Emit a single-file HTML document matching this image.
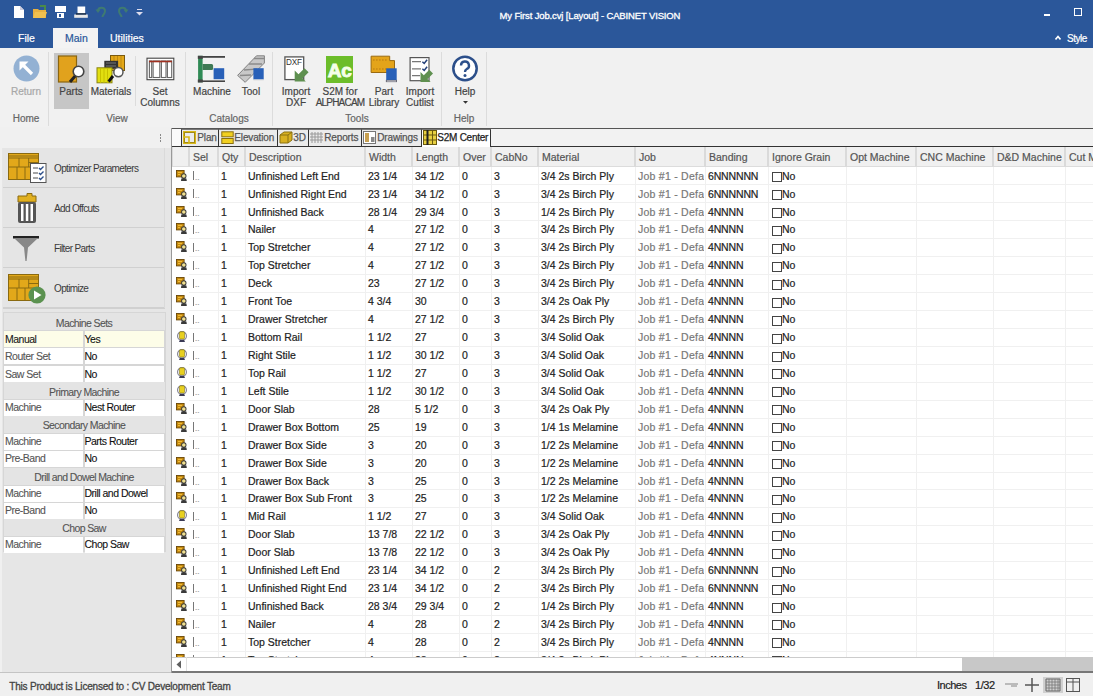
<!DOCTYPE html>
<html><head><meta charset="utf-8"><style>
html,body{margin:0;padding:0;}
body{width:1093px;height:696px;overflow:hidden;position:relative;background:#f0f0f0;font-family:"Liberation Sans", sans-serif;}
.t{position:absolute;white-space:nowrap;line-height:1;-webkit-text-stroke-width:0.2px;}
.r{position:absolute;}
</style></head><body>
<div class="r" style="left:0px;top:0px;width:1093px;height:48px;background:#2b579a;"></div><svg class="r" style="left:13px;top:5px" width="12" height="14" viewBox="0 0 12 14"><path d="M1 1h6l4 4v8H1z" fill="#fff"/><path d="M7 1v4h4" fill="#ccd" /></svg><svg class="r" style="left:32px;top:5px" width="16" height="14" viewBox="0 0 16 14"><path d="M1 4h5l1 1h7v8H1z" fill="#e8b040"/><path d="M3 7h12l-2 6H1z" fill="#f0c050"/><path d="M8 1h5v4" fill="none" stroke="#4a8a4a" stroke-width="2"/></svg><svg class="r" style="left:55px;top:6px" width="11" height="12" viewBox="0 0 11 12"><rect x="0" y="0" width="11" height="6" fill="#fff"/><rect x="2" y="7" width="7" height="5" fill="#fff"/><rect x="4" y="8" width="2" height="3" fill="#2b579a"/></svg><svg class="r" style="left:74px;top:6px" width="14" height="12" viewBox="0 0 14 12"><rect x="3.5" y="0.5" width="7.7" height="7" fill="#fff"/><rect x="0.2" y="8.5" width="13.6" height="3.3" fill="#e8e8e8"/><rect x="2" y="7.2" width="10" height="1.4" fill="#1a2a40"/></svg><svg class="r" style="left:95px;top:5px" width="12" height="13" viewBox="0 0 12 13"><path d="M3 6 C3 1.5 10 1.5 10 6 C10 9 7.5 10 7.5 12" fill="none" stroke="#3f7a72" stroke-width="2"/><path d="M0.5 4.5 L5.5 4.5 L3 8z" fill="#3f7a72"/></svg><svg class="r" style="left:117px;top:5px" width="12" height="13" viewBox="0 0 12 13"><path d="M9 6 C9 1.5 2 1.5 2 6 C2 9 4.5 10 4.5 12" fill="none" stroke="#3f7a72" stroke-width="2"/><path d="M6.5 4.5 L11.5 4.5 L9 8z" fill="#3f7a72"/></svg><svg class="r" style="left:136px;top:9px" width="7" height="7" viewBox="0 0 7 7"><rect x="1" y="0" width="5" height="1" fill="#dde"/><path d="M0 3h7l-3.5 3.5z" fill="#dde"/></svg><div class="t" style="left:499.5px;top:11px;font-size:9.5px;color:#fff;letter-spacing:-0.14px;font-weight:normal;-webkit-text-stroke-width:0.3px">My First Job.cvj [Layout] - CABINET VISION</div><div class="r" style="left:1044px;top:14px;width:6px;height:2px;background:#fff;"></div><div class="r" style="left:1074px;top:8px;width:6px;height:6px;background:transparent;border:1.5px solid #fff"></div><div class="t" style="left:18px;top:33px;font-size:10.5px;color:#fff;letter-spacing:0px;font-weight:normal;">File</div><div class="r" style="left:53px;top:28px;width:45px;height:20px;background:#f3f3f3;"></div><div class="t" style="left:65px;top:33px;font-size:10.5px;color:#2b579a;letter-spacing:0px;font-weight:normal;">Main</div><div class="t" style="left:110px;top:33px;font-size:10.5px;color:#fff;letter-spacing:0px;font-weight:normal;">Utilities</div><svg class="r" style="left:1055px;top:35px" width="6" height="5" viewBox="0 0 6 5"><path d="M0.5 4.5L3 1.5L5.5 4.5" fill="none" stroke="#fff" stroke-width="1.6"/></svg><div class="t" style="left:1067px;top:33.5px;font-size:10px;color:#fff;letter-spacing:-0.5px;font-weight:normal;">Style</div><div class="r" style="left:0px;top:48px;width:1093px;height:79px;background:#f1f1f1;"></div><div class="r" style="left:48px;top:52px;width:1px;height:74px;background:#dcdcdc;"></div><div class="r" style="left:185px;top:52px;width:1px;height:74px;background:#dcdcdc;"></div><div class="r" style="left:272px;top:52px;width:1px;height:74px;background:#dcdcdc;"></div><div class="r" style="left:441px;top:52px;width:1px;height:74px;background:#dcdcdc;"></div><div class="r" style="left:486px;top:52px;width:1px;height:74px;background:#dcdcdc;"></div><div class="r" style="left:135px;top:56px;width:1px;height:50px;background:#dcdcdc;"></div><div class="r" style="left:54px;top:53px;width:35px;height:56px;background:#c6c6c6;"></div><div class="t" style="left:-34.0px;width:120px;text-align:center;top:113.5px;font-size:10px;color:#666;letter-spacing:0px;">Home</div><div class="t" style="left:57.0px;width:120px;text-align:center;top:113.5px;font-size:10px;color:#666;letter-spacing:0px;">View</div><div class="t" style="left:169.0px;width:120px;text-align:center;top:113.5px;font-size:10px;color:#666;letter-spacing:0px;">Catalogs</div><div class="t" style="left:297.0px;width:120px;text-align:center;top:113.5px;font-size:10px;color:#666;letter-spacing:0px;">Tools</div><div class="t" style="left:404.0px;width:120px;text-align:center;top:113.5px;font-size:10px;color:#666;letter-spacing:0px;">Help</div><svg class="r" style="left:13px;top:55px" width="27" height="27" viewBox="0 0 27 27"><circle cx="13.5" cy="13.5" r="13" fill="#93b1d3"/><path d="M8 8 L19 19" stroke="#fff" stroke-width="3.2"/><path d="M6.5 6.5 h9 l-9 9z" fill="#fff"/></svg><div class="t" style="left:-34.0px;width:120px;text-align:center;top:86.8px;font-size:10px;color:#a8a8a8;letter-spacing:0px;">Return</div><svg class="r" style="left:57px;top:55px" width="28" height="29" viewBox="0 0 28 29"><rect x="1.5" y="1" width="18" height="26" fill="#e1a21d" stroke="#8a6510" stroke-width="1.2"/><path d="M13 27 L19 20" stroke="#222" stroke-width="3"/><circle cx="21.5" cy="16.5" r="5.3" fill="#fff" stroke="#444" stroke-width="1.6"/></svg><div class="t" style="left:11.0px;width:120px;text-align:center;top:86.8px;font-size:10px;color:#444;letter-spacing:0px;">Parts</div><svg class="r" style="left:96px;top:55px" width="30" height="29" viewBox="0 0 30 29"><rect x="14.5" y="0.5" width="14" height="15" fill="#e4a818" stroke="#7a5a10"/><path d="M18 1v14M21.5 1v14M25 1v14" stroke="#c08a10" stroke-width="1"/><rect x="8.3" y="5.8" width="13.8" height="8" fill="#333"/><path d="M10 8h10M10 11h10" stroke="#777" stroke-width="1"/><rect x="1" y="12.8" width="15" height="15" fill="#e2df10" stroke="#8a8410"/><path d="M4.5 13v15M8 13v15M11.5 13v15" stroke="#c8c000" stroke-width="1"/><path d="M12.6 26.7 L17 21" stroke="#111" stroke-width="3"/><circle cx="22.4" cy="17.1" r="4.6" fill="#fff" stroke="#555" stroke-width="1.5"/></svg><div class="t" style="left:51.0px;width:120px;text-align:center;top:86.8px;font-size:10px;color:#444;letter-spacing:0px;">Materials</div><svg class="r" style="left:146px;top:57px" width="29" height="24" viewBox="0 0 29 24"><rect x="1" y="1.2" width="26.8" height="21.5" fill="#fff" stroke="#444" stroke-width="1.1"/><rect x="3.4" y="4" width="2.3" height="16.5" fill="#fff" stroke="#666" stroke-width="1.1"/><rect x="7.1" y="4" width="6.7" height="16.5" fill="#fff" stroke="#666" stroke-width="1.1"/><rect x="15.4" y="4" width="4.6" height="16.5" fill="#fff" stroke="#666" stroke-width="1.1"/><rect x="21.4" y="4" width="4.3" height="16.5" fill="#fff" stroke="#666" stroke-width="1.1"/><path d="M3 4.5h23" stroke="#a03020" stroke-width="1.6"/></svg><div class="t" style="left:100.0px;width:120px;text-align:center;top:86.8px;font-size:10px;color:#444;letter-spacing:0px;">Set</div><div class="t" style="left:100.0px;width:120px;text-align:center;top:97.8px;font-size:10px;color:#444;letter-spacing:0px;">Columns</div><svg class="r" style="left:197px;top:55px" width="29" height="29" viewBox="0 0 29 29"><rect x="1.1" y="0.8" width="4.5" height="26.5" fill="#2f8a55"/><rect x="0.8" y="0.8" width="5" height="3" fill="#444"/><rect x="0.8" y="24.5" width="5" height="3" fill="#444"/><path d="M5 1.9h23" stroke="#444" stroke-width="1.8"/><path d="M5.6 9.1h9a1.5 1.5 0 0 1 1.5 1.5v2.8a1.5 1.5 0 0 1 -1.5 1.5h-9z" fill="#3f7a55"/><rect x="16.6" y="13.2" width="10.6" height="11" fill="#2860b8"/><path d="M5 26.2h23" stroke="#444" stroke-width="1.6"/></svg><div class="t" style="left:152.0px;width:120px;text-align:center;top:86.8px;font-size:10px;color:#444;letter-spacing:0px;">Machine</div><svg class="r" style="left:237px;top:55px" width="29" height="29" viewBox="0 0 29 29"><path d="M19.5 0.8 L27.4 0.8 L27.4 8 L8.2 27.3 L0.6 20.4z" fill="#c8c8c8" stroke="#777" stroke-width="0.9"/><path d="M17 3.5 L27 3.5 M12 9 L25 9 M7 15 L20 14 M3 20.5 L14 20" stroke="#8a8a8a" stroke-width="1.3"/><rect x="16.4" y="13.2" width="10.3" height="11.3" fill="#2860b8"/><path d="M16.4 25h10.3" stroke="#ddd"/></svg><div class="t" style="left:191.0px;width:120px;text-align:center;top:86.8px;font-size:10px;color:#444;letter-spacing:0px;">Tool</div><svg class="r" style="left:283px;top:56px" width="28" height="28" viewBox="0 0 28 28"><rect x="1.9" y="0.9" width="18.8" height="22.7" fill="#fff" stroke="#555" stroke-width="1.3"/><text x="3" y="8.7" font-size="8.2" font-family="Liberation Sans" fill="#333" letter-spacing="-0.2">DXF</text><path d="M11.7 25.5 L11.7 14.4 L15.5 18.2 L21.5 12.2 L25.6 16.3 L19.6 22.3 L22.8 25.5 Z" fill="#5f9050"/></svg><div class="t" style="left:236.0px;width:120px;text-align:center;top:86.8px;font-size:10px;color:#444;letter-spacing:0px;">Import</div><div class="t" style="left:236.0px;width:120px;text-align:center;top:97.8px;font-size:10px;color:#444;letter-spacing:0px;">DXF</div><svg class="r" style="left:326px;top:56px" width="27" height="27" viewBox="0 0 27 27"><rect x="0" y="0" width="27" height="27" fill="#6cbd2a"/><text x="1.8" y="20.5" style="font-weight:bold;font-size:19px;font-family:Liberation Sans" fill="#f4ffe8" stroke="#f4ffe8" stroke-width="0.9" letter-spacing="-0.2">Ac</text></svg><div class="t" style="left:280.0px;width:120px;text-align:center;top:86.8px;font-size:10px;color:#444;letter-spacing:0px;">S2M for</div><div class="t" style="left:280.0px;width:120px;text-align:center;top:97.8px;font-size:10px;color:#444;letter-spacing:-0.8px;">ALPHACAM</div><svg class="r" style="left:370px;top:55px" width="28" height="28" viewBox="0 0 28 28"><path d="M1.1 1.2 H19.7 V5.6 H24.5 V17.5 H1.1 Z" fill="#e4a41a" stroke="#9a6a10" stroke-width="1"/><path d="M3 5h15M3 14h15" stroke="#b87a10" stroke-width="1.2" stroke-dasharray="1.6 1.4"/><rect x="16.2" y="13.3" width="10.5" height="11.9" fill="#2860b8"/><rect x="16.2" y="25.2" width="10.5" height="1.6" fill="#fff" stroke="#445" stroke-width="0.6"/></svg><div class="t" style="left:324.0px;width:120px;text-align:center;top:86.8px;font-size:10px;color:#444;letter-spacing:0px;">Part</div><div class="t" style="left:324.0px;width:120px;text-align:center;top:97.8px;font-size:10px;color:#444;letter-spacing:0px;">Library</div><svg class="r" style="left:409px;top:57px" width="28" height="28" viewBox="0 0 28 28"><rect x="1.1" y="0.6" width="18.9" height="23.1" fill="#fff" stroke="#555" stroke-width="1.2"/><path d="M3 4.6h9M3 11.8h9M3 18.7h8" stroke="#777" stroke-width="1.3"/><path d="M13.4 4.8l1.8 1.7 2.9-3.8M13.4 11.8l1.8 1.7 2.9-3.8" fill="none" stroke="#223f78" stroke-width="1.5"/><path d="M11.5 25.1 L11.5 14.9 L14.8 18.2 L20.3 12.7 L24 16.4 L18.5 21.9 L21.7 25.1 Z" fill="#5f9050"/></svg><div class="t" style="left:360.0px;width:120px;text-align:center;top:86.8px;font-size:10px;color:#444;letter-spacing:0px;">Import</div><div class="t" style="left:360.0px;width:120px;text-align:center;top:97.8px;font-size:10px;color:#444;letter-spacing:0px;">Cutlist</div><svg class="r" style="left:451px;top:55px" width="28" height="28" viewBox="0 0 28 28"><circle cx="14" cy="13.5" r="11.7" fill="#fff" stroke="#2c4f8a" stroke-width="2.5"/><path d="M10 10.5 a4 4 0 1 1 5.5 3.7 c-1.2 0.6 -1.5 1.2 -1.5 2.8" fill="none" stroke="#2c4f8a" stroke-width="2.4"/><circle cx="14" cy="20.5" r="1.5" fill="#2c4f8a"/></svg><div class="t" style="left:405.0px;width:120px;text-align:center;top:86.8px;font-size:10px;color:#444;letter-spacing:0px;">Help</div><svg class="r" style="left:462.5px;top:100.5px" width="5" height="3" viewBox="0 0 5 3"><path d="M0 0h5l-2.5 2.8z" fill="#333"/></svg><div class="r" style="left:0px;top:127px;width:171px;height:545px;background:#e6e6e6;"></div><div class="r" style="left:0px;top:127px;width:171px;height:21px;background:#f0f0f0;"></div><div class="r" style="left:0px;top:127px;width:1.5px;height:545px;background:#f0f0f0;"></div><div class="r" style="left:0px;top:672px;width:171px;height:1px;background:#c8c8c8;"></div><div class="r" style="left:159.5px;top:134px;width:1.5px;height:1.5px;background:#8a8a8a;"></div><div class="r" style="left:159.5px;top:137px;width:1.5px;height:1.5px;background:#8a8a8a;"></div><div class="r" style="left:159.5px;top:140px;width:1.5px;height:1.5px;background:#8a8a8a;"></div><div class="r" style="left:3px;top:148px;width:162px;height:40px;background:#e5e5e5;"></div><div class="r" style="left:3px;top:186.5px;width:162px;height:2px;background:#d0d0d0;"></div><div class="r" style="left:164px;top:148px;width:1px;height:40px;background:#dadada;"></div><div class="t" style="left:54px;top:163.5px;font-size:10px;color:#3a3a3a;letter-spacing:-0.65px;font-weight:normal;-webkit-text-stroke-width:0">Optimizer Parameters</div><div class="r" style="left:3px;top:188px;width:162px;height:40px;background:#e5e5e5;"></div><div class="r" style="left:3px;top:226.5px;width:162px;height:2px;background:#d0d0d0;"></div><div class="r" style="left:164px;top:188px;width:1px;height:40px;background:#dadada;"></div><div class="t" style="left:54px;top:203.5px;font-size:10px;color:#3a3a3a;letter-spacing:-0.65px;font-weight:normal;-webkit-text-stroke-width:0">Add Offcuts</div><div class="r" style="left:3px;top:228px;width:162px;height:40px;background:#e5e5e5;"></div><div class="r" style="left:3px;top:266.5px;width:162px;height:2px;background:#d0d0d0;"></div><div class="r" style="left:164px;top:228px;width:1px;height:40px;background:#dadada;"></div><div class="t" style="left:54px;top:243.5px;font-size:10px;color:#3a3a3a;letter-spacing:-0.65px;font-weight:normal;-webkit-text-stroke-width:0">Filter Parts</div><div class="r" style="left:3px;top:268px;width:162px;height:40px;background:#e5e5e5;"></div><div class="r" style="left:3px;top:306.5px;width:162px;height:2px;background:#d0d0d0;"></div><div class="r" style="left:164px;top:268px;width:1px;height:40px;background:#dadada;"></div><div class="t" style="left:54px;top:283.5px;font-size:10px;color:#3a3a3a;letter-spacing:-0.65px;font-weight:normal;-webkit-text-stroke-width:0">Optimize</div><svg class="r" style="left:8px;top:153px" width="39" height="31" viewBox="0 0 39 31"><rect x="0.5" y="0.5" width="30" height="26" fill="#e2a81a" stroke="#8a6a10"/><path d="M0.5 3h30M0.5 5h30M0.5 14h30M11 5v9M20.7 5v9M20.7 9.5h10M9 14v12.5M17 14v12.5" stroke="#8a6a10" stroke-width="1"/><rect x="22.5" y="10.5" width="15.5" height="19" fill="#fff" stroke="#555"/><path d="M25 15h5M25 20h5M25 25h5" stroke="#888" stroke-width="1.3"/><path d="M31 15l1.5 1.5 3-3M31 20l1.5 1.5 3-3M31 25l1.5 1.5 3-3" fill="none" stroke="#2c4f8a" stroke-width="1.4"/></svg><svg class="r" style="left:17px;top:193px" width="20" height="31" viewBox="0 0 20 31"><path d="M1 3h9v-2.5h5v2.5h4v6H1z" fill="#e1b020" stroke="#8a6a10"/><rect x="1" y="9" width="18" height="21" rx="2" fill="#555"/><rect x="4" y="11" width="2.5" height="17" fill="#fff"/><rect x="8.8" y="11" width="2.5" height="17" fill="#fff"/><rect x="13.5" y="11" width="2.5" height="17" fill="#fff"/></svg><svg class="r" style="left:13px;top:235px" width="27" height="27" viewBox="0 0 27 27"><rect x="0" y="1" width="26" height="2.5" fill="#222"/><path d="M1.5 3.5H24.5L15 12.5L13.6 26L12.4 26L11 12.5Z" fill="#888"/></svg><svg class="r" style="left:8px;top:274px" width="40" height="30" viewBox="0 0 40 30"><rect x="0.5" y="0.5" width="30" height="26" fill="#e2a81a" stroke="#8a6a10"/><path d="M0.5 3h30M0.5 5h30M0.5 14h30M11 5v9M20.7 5v9M20.7 9.5h10M9 14v12.5M17 14v12.5" stroke="#8a6a10" stroke-width="1"/><circle cx="29" cy="21" r="8.6" fill="#5b9250"/><path d="M26 16.5 L33.5 21 L26 25.5z" fill="#fff"/></svg><div class="r" style="left:3px;top:312px;width:163px;height:240px;background:#d6d6d6;"></div><div class="r" style="left:4px;top:313px;width:161px;height:17px;background:#e4e4e4;"></div><div class="t" style="left:4.0px;width:160px;text-align:center;top:317.8px;font-size:10.5px;color:#555;letter-spacing:-0.6px;-webkit-text-stroke-width:0.1px">Machine Sets</div><div class="r" style="left:4px;top:331px;width:79px;height:16px;background:#fdfde8;"></div><div class="r" style="left:85px;top:331px;width:79px;height:16px;background:#fdfde8;"></div><div class="t" style="left:5px;top:333.73846153846154px;font-size:10.5px;color:#1a1a1a;letter-spacing:-0.5px;font-weight:normal;-webkit-text-stroke-width:0.1px">Manual</div><div class="t" style="left:84.5px;top:333.73846153846154px;font-size:10.5px;color:#111;letter-spacing:-0.5px;font-weight:normal;-webkit-text-stroke-width:0.1px">Yes</div><div class="r" style="left:4px;top:348px;width:79px;height:16px;background:#fff;"></div><div class="r" style="left:85px;top:348px;width:79px;height:16px;background:#fff;"></div><div class="t" style="left:5px;top:350.67692307692306px;font-size:10.5px;color:#555;letter-spacing:-0.5px;font-weight:normal;-webkit-text-stroke-width:0.1px">Router Set</div><div class="t" style="left:84.5px;top:350.67692307692306px;font-size:10.5px;color:#111;letter-spacing:-0.5px;font-weight:normal;-webkit-text-stroke-width:0.1px">No</div><div class="r" style="left:4px;top:366px;width:79px;height:16px;background:#fff;"></div><div class="r" style="left:85px;top:366px;width:79px;height:16px;background:#fff;"></div><div class="t" style="left:5px;top:368.61538461538464px;font-size:10.5px;color:#555;letter-spacing:-0.5px;font-weight:normal;-webkit-text-stroke-width:0.1px">Saw Set</div><div class="t" style="left:84.5px;top:368.61538461538464px;font-size:10.5px;color:#111;letter-spacing:-0.5px;font-weight:normal;-webkit-text-stroke-width:0.1px">No</div><div class="r" style="left:4px;top:382px;width:161px;height:17px;background:#e4e4e4;"></div><div class="t" style="left:4.0px;width:160px;text-align:center;top:386.55384615384617px;font-size:10.5px;color:#555;letter-spacing:-0.6px;-webkit-text-stroke-width:0.1px">Primary Machine</div><div class="r" style="left:4px;top:400px;width:79px;height:16px;background:#fff;"></div><div class="r" style="left:85px;top:400px;width:79px;height:16px;background:#fff;"></div><div class="t" style="left:5px;top:402.4923076923077px;font-size:10.5px;color:#555;letter-spacing:-0.5px;font-weight:normal;-webkit-text-stroke-width:0.1px">Machine</div><div class="t" style="left:84.5px;top:402.4923076923077px;font-size:10.5px;color:#111;letter-spacing:-0.5px;font-weight:normal;-webkit-text-stroke-width:0.1px">Nest Router</div><div class="r" style="left:4px;top:416px;width:161px;height:17px;background:#e4e4e4;"></div><div class="t" style="left:4.0px;width:160px;text-align:center;top:420.4307692307692px;font-size:10.5px;color:#555;letter-spacing:-0.6px;-webkit-text-stroke-width:0.1px">Secondary Machine</div><div class="r" style="left:4px;top:434px;width:79px;height:16px;background:#fff;"></div><div class="r" style="left:85px;top:434px;width:79px;height:16px;background:#fff;"></div><div class="t" style="left:5px;top:436.3692307692308px;font-size:10.5px;color:#555;letter-spacing:-0.5px;font-weight:normal;-webkit-text-stroke-width:0.1px">Machine</div><div class="t" style="left:84.5px;top:436.3692307692308px;font-size:10.5px;color:#111;letter-spacing:-0.5px;font-weight:normal;-webkit-text-stroke-width:0.1px">Parts Router</div><div class="r" style="left:4px;top:451px;width:79px;height:16px;background:#fff;"></div><div class="r" style="left:85px;top:451px;width:79px;height:16px;background:#fff;"></div><div class="t" style="left:5px;top:453.3076923076923px;font-size:10.5px;color:#555;letter-spacing:-0.5px;font-weight:normal;-webkit-text-stroke-width:0.1px">Pre-Band</div><div class="t" style="left:84.5px;top:453.3076923076923px;font-size:10.5px;color:#111;letter-spacing:-0.5px;font-weight:normal;-webkit-text-stroke-width:0.1px">No</div><div class="r" style="left:4px;top:468px;width:161px;height:17px;background:#e4e4e4;"></div><div class="t" style="left:4.0px;width:160px;text-align:center;top:472.24615384615385px;font-size:10.5px;color:#555;letter-spacing:-0.6px;-webkit-text-stroke-width:0.1px">Drill and Dowel Machine</div><div class="r" style="left:4px;top:486px;width:79px;height:16px;background:#fff;"></div><div class="r" style="left:85px;top:486px;width:79px;height:16px;background:#fff;"></div><div class="t" style="left:5px;top:488.18461538461537px;font-size:10.5px;color:#555;letter-spacing:-0.5px;font-weight:normal;-webkit-text-stroke-width:0.1px">Machine</div><div class="t" style="left:84.5px;top:488.18461538461537px;font-size:10.5px;color:#111;letter-spacing:-0.5px;font-weight:normal;-webkit-text-stroke-width:0.1px">Drill and Dowel</div><div class="r" style="left:4px;top:503px;width:79px;height:16px;background:#fff;"></div><div class="r" style="left:85px;top:503px;width:79px;height:16px;background:#fff;"></div><div class="t" style="left:5px;top:505.12307692307695px;font-size:10.5px;color:#555;letter-spacing:-0.5px;font-weight:normal;-webkit-text-stroke-width:0.1px">Pre-Band</div><div class="t" style="left:84.5px;top:505.12307692307695px;font-size:10.5px;color:#111;letter-spacing:-0.5px;font-weight:normal;-webkit-text-stroke-width:0.1px">No</div><div class="r" style="left:4px;top:519px;width:161px;height:17px;background:#e4e4e4;"></div><div class="t" style="left:4.0px;width:160px;text-align:center;top:523.0615384615385px;font-size:10.5px;color:#555;letter-spacing:-0.6px;-webkit-text-stroke-width:0.1px">Chop Saw</div><div class="r" style="left:4px;top:537px;width:79px;height:16px;background:#fff;"></div><div class="r" style="left:85px;top:537px;width:79px;height:16px;background:#fff;"></div><div class="t" style="left:5px;top:539.0px;font-size:10.5px;color:#555;letter-spacing:-0.5px;font-weight:normal;-webkit-text-stroke-width:0.1px">Machine</div><div class="t" style="left:84.5px;top:539.0px;font-size:10.5px;color:#111;letter-spacing:-0.5px;font-weight:normal;-webkit-text-stroke-width:0.1px">Chop Saw</div><div class="r" style="left:171px;top:128px;width:922px;height:544px;background:#fff;"></div><div class="r" style="left:171px;top:128px;width:922px;height:18px;background:#f2f2f2;"></div><div class="r" style="left:171px;top:128px;width:922px;height:1.2px;background:#555;"></div><div class="r" style="left:171px;top:145.8px;width:922px;height:1.2px;background:#333;"></div><div class="r" style="left:172px;top:129px;width:9px;height:17px;background:#fafafa;"></div><div class="r" style="left:181px;top:129px;width:37px;height:17px;background:#ebebeb;box-sizing:border-box;border-left:1.5px solid #333;border-top:1px solid #777;"></div><div class="t" style="left:197.3px;top:133.2px;font-size:10px;color:#555;letter-spacing:-0.15px;font-weight:normal;-webkit-text-stroke-width:0.25px">Plan</div><div class="r" style="left:218px;top:129px;width:59px;height:17px;background:#ebebeb;box-sizing:border-box;border-left:1.5px solid #333;border-top:1px solid #777;"></div><div class="t" style="left:234.3px;top:133.2px;font-size:10px;color:#555;letter-spacing:-0.15px;font-weight:normal;-webkit-text-stroke-width:0.25px">Elevation</div><div class="r" style="left:277px;top:129px;width:31px;height:17px;background:#ebebeb;box-sizing:border-box;border-left:1.5px solid #333;border-top:1px solid #777;"></div><div class="t" style="left:293.3px;top:133.2px;font-size:10px;color:#555;letter-spacing:-0.15px;font-weight:normal;-webkit-text-stroke-width:0.25px">3D</div><div class="r" style="left:308px;top:129px;width:53px;height:17px;background:#ebebeb;box-sizing:border-box;border-left:1.5px solid #333;border-top:1px solid #777;"></div><div class="t" style="left:324.3px;top:133.2px;font-size:10px;color:#555;letter-spacing:-0.15px;font-weight:normal;-webkit-text-stroke-width:0.25px">Reports</div><div class="r" style="left:361px;top:129px;width:60px;height:17px;background:#ebebeb;box-sizing:border-box;border-left:1.5px solid #333;border-top:1px solid #777;"></div><div class="t" style="left:377.3px;top:133.2px;font-size:10px;color:#555;letter-spacing:-0.15px;font-weight:normal;-webkit-text-stroke-width:0.25px">Drawings</div><div class="r" style="left:421px;top:129px;width:70px;height:18px;background:#fff;box-sizing:border-box;border-left:1.5px solid #333;border-top:1px solid #777;border-right:1.5px solid #333;"></div><div class="t" style="left:437.3px;top:133.2px;font-size:10px;color:#222;letter-spacing:-0.25px;font-weight:normal;-webkit-text-stroke-width:0.25px">S2M Center</div><svg class="r" style="left:183px;top:131px" width="13" height="13" viewBox="0 0 13 13"><path d="M1 1h11v11H1z" fill="none" stroke="#d8b818" stroke-width="2"/><path d="M1.5 1.5h10v10h-10z" fill="none" stroke="#6a5a10" stroke-width="0.5"/><path d="M1 6h5v6" fill="none" stroke="#d8b818" stroke-width="1.6"/></svg><svg class="r" style="left:221px;top:131px" width="13" height="13" viewBox="0 0 13 13"><rect x="0.8" y="0.8" width="11.4" height="5" fill="#f2d020" stroke="#8a7010"/><rect x="0.8" y="7.5" width="11.4" height="5" fill="#f2d020" stroke="#8a7010"/></svg><svg class="r" style="left:279px;top:131px" width="14" height="13" viewBox="0 0 14 13"><path d="M1 4 L5 1 H13 V9 L9 12 H1z" fill="#d8b020" stroke="#8a7010"/><path d="M1 4h8v8M9 4l4-3" fill="none" stroke="#8a7010"/></svg><svg class="r" style="left:310px;top:130px" width="13" height="14" viewBox="0 0 13 14"><path d="M2 2v11M5 2v11M8 2v11M11 2v11M0 4h13M0 7h13M0 10h13" stroke="#999" stroke-width="1"/></svg><svg class="r" style="left:363px;top:131px" width="13" height="13" viewBox="0 0 13 13"><rect x="0.5" y="0.5" width="12" height="12" fill="#fff" stroke="#777"/><rect x="2" y="2" width="4" height="9" fill="#c8a050"/><rect x="8" y="6" width="3.5" height="5" fill="#888"/></svg><svg class="r" style="left:423px;top:130px" width="14" height="15" viewBox="0 0 14 15"><rect x="0.5" y="0.5" width="13" height="14" fill="#e8d040" stroke="#6a5a10"/><path d="M4.5 0v15M9.5 0v15M0 5h14M0 10h14" stroke="#6a5a10"/><path d="M4.5 0v15" stroke="#222" stroke-width="2"/></svg><div class="r" style="left:172px;top:147px;width:921px;height:20px;background:#f0f0f0;"></div><div class="r" style="left:172px;top:166px;width:921px;height:1px;background:#dcdcdc;"></div><div class="r" style="left:171px;top:147px;width:2px;height:20px;background:#dadada;"></div><div class="r" style="left:188px;top:147px;width:2px;height:20px;background:#dadada;"></div><div class="t" style="left:193px;top:151.5px;font-size:10.5px;color:#555;letter-spacing:0px;font-weight:normal;">Sel</div><div class="r" style="left:217px;top:147px;width:2px;height:20px;background:#dadada;"></div><div class="t" style="left:222px;top:151.5px;font-size:10.5px;color:#555;letter-spacing:0px;font-weight:normal;">Qty</div><div class="r" style="left:244px;top:147px;width:2px;height:20px;background:#dadada;"></div><div class="t" style="left:249px;top:151.5px;font-size:10.5px;color:#555;letter-spacing:0px;font-weight:normal;">Description</div><div class="r" style="left:364px;top:147px;width:2px;height:20px;background:#dadada;"></div><div class="t" style="left:369px;top:151.5px;font-size:10.5px;color:#555;letter-spacing:0px;font-weight:normal;">Width</div><div class="r" style="left:411px;top:147px;width:2px;height:20px;background:#dadada;"></div><div class="t" style="left:416px;top:151.5px;font-size:10.5px;color:#555;letter-spacing:0px;font-weight:normal;">Length</div><div class="r" style="left:458px;top:147px;width:2px;height:20px;background:#dadada;"></div><div class="t" style="left:463px;top:151.5px;font-size:10.5px;color:#555;letter-spacing:0px;font-weight:normal;">Over</div><div class="r" style="left:490px;top:147px;width:2px;height:20px;background:#dadada;"></div><div class="t" style="left:495px;top:151.5px;font-size:10.5px;color:#555;letter-spacing:0px;font-weight:normal;">CabNo</div><div class="r" style="left:537px;top:147px;width:2px;height:20px;background:#dadada;"></div><div class="t" style="left:542px;top:151.5px;font-size:10.5px;color:#555;letter-spacing:0px;font-weight:normal;">Material</div><div class="r" style="left:634px;top:147px;width:2px;height:20px;background:#dadada;"></div><div class="t" style="left:639px;top:151.5px;font-size:10.5px;color:#555;letter-spacing:0px;font-weight:normal;">Job</div><div class="r" style="left:704px;top:147px;width:2px;height:20px;background:#dadada;"></div><div class="t" style="left:709px;top:151.5px;font-size:10.5px;color:#555;letter-spacing:0px;font-weight:normal;">Banding</div><div class="r" style="left:767px;top:147px;width:2px;height:20px;background:#dadada;"></div><div class="t" style="left:772px;top:151.5px;font-size:10.5px;color:#555;letter-spacing:0px;font-weight:normal;">Ignore Grain</div><div class="r" style="left:845px;top:147px;width:2px;height:20px;background:#dadada;"></div><div class="t" style="left:850px;top:151.5px;font-size:10.5px;color:#555;letter-spacing:0px;font-weight:normal;">Opt Machine</div><div class="r" style="left:915px;top:147px;width:2px;height:20px;background:#dadada;"></div><div class="t" style="left:920px;top:151.5px;font-size:10.5px;color:#555;letter-spacing:0px;font-weight:normal;">CNC Machine</div><div class="r" style="left:992px;top:147px;width:2px;height:20px;background:#dadada;"></div><div class="t" style="left:997px;top:151.5px;font-size:10.5px;color:#555;letter-spacing:0px;font-weight:normal;">D&amp;D Machine</div><div class="r" style="left:1064px;top:147px;width:2px;height:20px;background:#dadada;"></div><div class="t" style="left:1069px;top:151.5px;font-size:10.5px;color:#555;letter-spacing:0px;font-weight:normal;">Cut Machine</div><div class="r b" style="left:172px;top:167px;width:921px;height:490px;overflow:hidden"><div class="r" style="left:17px;top:17px;width:904px;height:1px;background:#f0f0f0;"></div><svg class="r" style="left:4px;top:2.7px" width="12" height="12" viewBox="0 0 12 12"><rect x="0.5" y="0.5" width="7.6" height="6.4" fill="#c48a0e" stroke="#6a4606" stroke-width="0.9"/><path d="M2 2.5h4M2 4.5h2" stroke="#f5c040" stroke-width="0.9"/><path d="M5 11 L5.3 8.6 Q7.8 7.2 10.4 8.6 L10.8 11z" fill="#3a3a3a"/><circle cx="7.8" cy="6" r="2.7" fill="#3a3a3a"/><circle cx="7.8" cy="6" r="1.8" fill="#f0e090"/></svg><div class="r" style="left:20.5px;top:4.3px;width:1.3px;height:9.2px;background:#777;"></div><div class="t" style="left:23px;top:6.7px;font-size:8px;color:#999;letter-spacing:0px;font-weight:normal;">..</div><div class="t" style="left:49px;top:3.7px;font-size:10.5px;color:#222;letter-spacing:0px;font-weight:normal;">1</div><div class="t" style="left:76px;top:3.7px;font-size:10.5px;color:#222;letter-spacing:0px;font-weight:normal;">Unfinished Left End</div><div class="t" style="left:196px;top:3.7px;font-size:10.5px;color:#222;letter-spacing:0px;font-weight:normal;">23 1/4</div><div class="t" style="left:243px;top:3.7px;font-size:10.5px;color:#222;letter-spacing:0px;font-weight:normal;">34 1/2</div><div class="t" style="left:290px;top:3.7px;font-size:10.5px;color:#222;letter-spacing:0px;font-weight:normal;">0</div><div class="t" style="left:322px;top:3.7px;font-size:10.5px;color:#222;letter-spacing:0px;font-weight:normal;">3</div><div class="t" style="left:369px;top:3.7px;font-size:10.5px;color:#222;letter-spacing:0px;font-weight:normal;">3/4 2s Birch Ply</div><div class="t" style="left:466px;top:3.7px;font-size:10.5px;color:#777;letter-spacing:0.25px;font-weight:normal;width:65.5px;overflow:hidden">Job #1 - Default</div><div class="t" style="left:536px;top:3.7px;font-size:10.5px;color:#222;letter-spacing:-0.15px;font-weight:normal;">6NNNNNN</div><div class="r" style="left:600px;top:5.2px;width:10px;height:10px;background:transparent;box-sizing:border-box;border:1.2px solid #444"></div><div class="t" style="left:610px;top:3.7px;font-size:10.5px;color:#222;letter-spacing:-0.15px;font-weight:normal;">No</div><div class="r" style="left:17px;top:35px;width:904px;height:1px;background:#f0f0f0;"></div><svg class="r" style="left:4px;top:20.63px" width="12" height="12" viewBox="0 0 12 12"><rect x="0.5" y="0.5" width="7.6" height="6.4" fill="#c48a0e" stroke="#6a4606" stroke-width="0.9"/><path d="M2 2.5h4M2 4.5h2" stroke="#f5c040" stroke-width="0.9"/><path d="M5 11 L5.3 8.6 Q7.8 7.2 10.4 8.6 L10.8 11z" fill="#3a3a3a"/><circle cx="7.8" cy="6" r="2.7" fill="#3a3a3a"/><circle cx="7.8" cy="6" r="1.8" fill="#f0e090"/></svg><div class="r" style="left:20.5px;top:22.23px;width:1.3px;height:9.2px;background:#777;"></div><div class="t" style="left:23px;top:24.63px;font-size:8px;color:#999;letter-spacing:0px;font-weight:normal;">..</div><div class="t" style="left:49px;top:21.63px;font-size:10.5px;color:#222;letter-spacing:0px;font-weight:normal;">1</div><div class="t" style="left:76px;top:21.63px;font-size:10.5px;color:#222;letter-spacing:0px;font-weight:normal;">Unfinished Right End</div><div class="t" style="left:196px;top:21.63px;font-size:10.5px;color:#222;letter-spacing:0px;font-weight:normal;">23 1/4</div><div class="t" style="left:243px;top:21.63px;font-size:10.5px;color:#222;letter-spacing:0px;font-weight:normal;">34 1/2</div><div class="t" style="left:290px;top:21.63px;font-size:10.5px;color:#222;letter-spacing:0px;font-weight:normal;">0</div><div class="t" style="left:322px;top:21.63px;font-size:10.5px;color:#222;letter-spacing:0px;font-weight:normal;">3</div><div class="t" style="left:369px;top:21.63px;font-size:10.5px;color:#222;letter-spacing:0px;font-weight:normal;">3/4 2s Birch Ply</div><div class="t" style="left:466px;top:21.63px;font-size:10.5px;color:#777;letter-spacing:0.25px;font-weight:normal;width:65.5px;overflow:hidden">Job #1 - Default</div><div class="t" style="left:536px;top:21.63px;font-size:10.5px;color:#222;letter-spacing:-0.15px;font-weight:normal;">6NNNNNN</div><div class="r" style="left:600px;top:23.13px;width:10px;height:10px;background:transparent;box-sizing:border-box;border:1.2px solid #444"></div><div class="t" style="left:610px;top:21.63px;font-size:10.5px;color:#222;letter-spacing:-0.15px;font-weight:normal;">No</div><div class="r" style="left:17px;top:53px;width:904px;height:1px;background:#f0f0f0;"></div><svg class="r" style="left:4px;top:38.56px" width="12" height="12" viewBox="0 0 12 12"><rect x="0.5" y="0.5" width="7.6" height="6.4" fill="#c48a0e" stroke="#6a4606" stroke-width="0.9"/><path d="M2 2.5h4M2 4.5h2" stroke="#f5c040" stroke-width="0.9"/><path d="M5 11 L5.3 8.6 Q7.8 7.2 10.4 8.6 L10.8 11z" fill="#3a3a3a"/><circle cx="7.8" cy="6" r="2.7" fill="#3a3a3a"/><circle cx="7.8" cy="6" r="1.8" fill="#f0e090"/></svg><div class="r" style="left:20.5px;top:40.160000000000004px;width:1.3px;height:9.2px;background:#777;"></div><div class="t" style="left:23px;top:42.56px;font-size:8px;color:#999;letter-spacing:0px;font-weight:normal;">..</div><div class="t" style="left:49px;top:39.56px;font-size:10.5px;color:#222;letter-spacing:0px;font-weight:normal;">1</div><div class="t" style="left:76px;top:39.56px;font-size:10.5px;color:#222;letter-spacing:0px;font-weight:normal;">Unfinished Back</div><div class="t" style="left:196px;top:39.56px;font-size:10.5px;color:#222;letter-spacing:0px;font-weight:normal;">28 1/4</div><div class="t" style="left:243px;top:39.56px;font-size:10.5px;color:#222;letter-spacing:0px;font-weight:normal;">29 3/4</div><div class="t" style="left:290px;top:39.56px;font-size:10.5px;color:#222;letter-spacing:0px;font-weight:normal;">0</div><div class="t" style="left:322px;top:39.56px;font-size:10.5px;color:#222;letter-spacing:0px;font-weight:normal;">3</div><div class="t" style="left:369px;top:39.56px;font-size:10.5px;color:#222;letter-spacing:0px;font-weight:normal;">1/4 2s Birch Ply</div><div class="t" style="left:466px;top:39.56px;font-size:10.5px;color:#777;letter-spacing:0.25px;font-weight:normal;width:65.5px;overflow:hidden">Job #1 - Default</div><div class="t" style="left:536px;top:39.56px;font-size:10.5px;color:#222;letter-spacing:-0.15px;font-weight:normal;">4NNNN</div><div class="r" style="left:600px;top:41.06px;width:10px;height:10px;background:transparent;box-sizing:border-box;border:1.2px solid #444"></div><div class="t" style="left:610px;top:39.56px;font-size:10.5px;color:#222;letter-spacing:-0.15px;font-weight:normal;">No</div><div class="r" style="left:17px;top:71px;width:904px;height:1px;background:#f0f0f0;"></div><svg class="r" style="left:4px;top:56.49px" width="12" height="12" viewBox="0 0 12 12"><rect x="0.5" y="0.5" width="7.6" height="6.4" fill="#c48a0e" stroke="#6a4606" stroke-width="0.9"/><path d="M2 2.5h4M2 4.5h2" stroke="#f5c040" stroke-width="0.9"/><path d="M5 11 L5.3 8.6 Q7.8 7.2 10.4 8.6 L10.8 11z" fill="#3a3a3a"/><circle cx="7.8" cy="6" r="2.7" fill="#3a3a3a"/><circle cx="7.8" cy="6" r="1.8" fill="#f0e090"/></svg><div class="r" style="left:20.5px;top:58.09px;width:1.3px;height:9.2px;background:#777;"></div><div class="t" style="left:23px;top:60.49px;font-size:8px;color:#999;letter-spacing:0px;font-weight:normal;">..</div><div class="t" style="left:49px;top:57.49px;font-size:10.5px;color:#222;letter-spacing:0px;font-weight:normal;">1</div><div class="t" style="left:76px;top:57.49px;font-size:10.5px;color:#222;letter-spacing:0px;font-weight:normal;">Nailer</div><div class="t" style="left:196px;top:57.49px;font-size:10.5px;color:#222;letter-spacing:0px;font-weight:normal;">4</div><div class="t" style="left:243px;top:57.49px;font-size:10.5px;color:#222;letter-spacing:0px;font-weight:normal;">27 1/2</div><div class="t" style="left:290px;top:57.49px;font-size:10.5px;color:#222;letter-spacing:0px;font-weight:normal;">0</div><div class="t" style="left:322px;top:57.49px;font-size:10.5px;color:#222;letter-spacing:0px;font-weight:normal;">3</div><div class="t" style="left:369px;top:57.49px;font-size:10.5px;color:#222;letter-spacing:0px;font-weight:normal;">3/4 2s Birch Ply</div><div class="t" style="left:466px;top:57.49px;font-size:10.5px;color:#777;letter-spacing:0.25px;font-weight:normal;width:65.5px;overflow:hidden">Job #1 - Default</div><div class="t" style="left:536px;top:57.49px;font-size:10.5px;color:#222;letter-spacing:-0.15px;font-weight:normal;">4NNNN</div><div class="r" style="left:600px;top:58.99px;width:10px;height:10px;background:transparent;box-sizing:border-box;border:1.2px solid #444"></div><div class="t" style="left:610px;top:57.49px;font-size:10.5px;color:#222;letter-spacing:-0.15px;font-weight:normal;">No</div><div class="r" style="left:17px;top:89px;width:904px;height:1px;background:#f0f0f0;"></div><svg class="r" style="left:4px;top:74.42px" width="12" height="12" viewBox="0 0 12 12"><rect x="0.5" y="0.5" width="7.6" height="6.4" fill="#c48a0e" stroke="#6a4606" stroke-width="0.9"/><path d="M2 2.5h4M2 4.5h2" stroke="#f5c040" stroke-width="0.9"/><path d="M5 11 L5.3 8.6 Q7.8 7.2 10.4 8.6 L10.8 11z" fill="#3a3a3a"/><circle cx="7.8" cy="6" r="2.7" fill="#3a3a3a"/><circle cx="7.8" cy="6" r="1.8" fill="#f0e090"/></svg><div class="r" style="left:20.5px;top:76.02px;width:1.3px;height:9.2px;background:#777;"></div><div class="t" style="left:23px;top:78.42px;font-size:8px;color:#999;letter-spacing:0px;font-weight:normal;">..</div><div class="t" style="left:49px;top:75.42px;font-size:10.5px;color:#222;letter-spacing:0px;font-weight:normal;">1</div><div class="t" style="left:76px;top:75.42px;font-size:10.5px;color:#222;letter-spacing:0px;font-weight:normal;">Top Stretcher</div><div class="t" style="left:196px;top:75.42px;font-size:10.5px;color:#222;letter-spacing:0px;font-weight:normal;">4</div><div class="t" style="left:243px;top:75.42px;font-size:10.5px;color:#222;letter-spacing:0px;font-weight:normal;">27 1/2</div><div class="t" style="left:290px;top:75.42px;font-size:10.5px;color:#222;letter-spacing:0px;font-weight:normal;">0</div><div class="t" style="left:322px;top:75.42px;font-size:10.5px;color:#222;letter-spacing:0px;font-weight:normal;">3</div><div class="t" style="left:369px;top:75.42px;font-size:10.5px;color:#222;letter-spacing:0px;font-weight:normal;">3/4 2s Birch Ply</div><div class="t" style="left:466px;top:75.42px;font-size:10.5px;color:#777;letter-spacing:0.25px;font-weight:normal;width:65.5px;overflow:hidden">Job #1 - Default</div><div class="t" style="left:536px;top:75.42px;font-size:10.5px;color:#222;letter-spacing:-0.15px;font-weight:normal;">4NNNN</div><div class="r" style="left:600px;top:76.92px;width:10px;height:10px;background:transparent;box-sizing:border-box;border:1.2px solid #444"></div><div class="t" style="left:610px;top:75.42px;font-size:10.5px;color:#222;letter-spacing:-0.15px;font-weight:normal;">No</div><div class="r" style="left:17px;top:107px;width:904px;height:1px;background:#f0f0f0;"></div><svg class="r" style="left:4px;top:92.35000000000001px" width="12" height="12" viewBox="0 0 12 12"><rect x="0.5" y="0.5" width="7.6" height="6.4" fill="#c48a0e" stroke="#6a4606" stroke-width="0.9"/><path d="M2 2.5h4M2 4.5h2" stroke="#f5c040" stroke-width="0.9"/><path d="M5 11 L5.3 8.6 Q7.8 7.2 10.4 8.6 L10.8 11z" fill="#3a3a3a"/><circle cx="7.8" cy="6" r="2.7" fill="#3a3a3a"/><circle cx="7.8" cy="6" r="1.8" fill="#f0e090"/></svg><div class="r" style="left:20.5px;top:93.95px;width:1.3px;height:9.2px;background:#777;"></div><div class="t" style="left:23px;top:96.35000000000001px;font-size:8px;color:#999;letter-spacing:0px;font-weight:normal;">..</div><div class="t" style="left:49px;top:93.35000000000001px;font-size:10.5px;color:#222;letter-spacing:0px;font-weight:normal;">1</div><div class="t" style="left:76px;top:93.35000000000001px;font-size:10.5px;color:#222;letter-spacing:0px;font-weight:normal;">Top Stretcher</div><div class="t" style="left:196px;top:93.35000000000001px;font-size:10.5px;color:#222;letter-spacing:0px;font-weight:normal;">4</div><div class="t" style="left:243px;top:93.35000000000001px;font-size:10.5px;color:#222;letter-spacing:0px;font-weight:normal;">27 1/2</div><div class="t" style="left:290px;top:93.35000000000001px;font-size:10.5px;color:#222;letter-spacing:0px;font-weight:normal;">0</div><div class="t" style="left:322px;top:93.35000000000001px;font-size:10.5px;color:#222;letter-spacing:0px;font-weight:normal;">3</div><div class="t" style="left:369px;top:93.35000000000001px;font-size:10.5px;color:#222;letter-spacing:0px;font-weight:normal;">3/4 2s Birch Ply</div><div class="t" style="left:466px;top:93.35000000000001px;font-size:10.5px;color:#777;letter-spacing:0.25px;font-weight:normal;width:65.5px;overflow:hidden">Job #1 - Default</div><div class="t" style="left:536px;top:93.35000000000001px;font-size:10.5px;color:#222;letter-spacing:-0.15px;font-weight:normal;">4NNNN</div><div class="r" style="left:600px;top:94.85000000000001px;width:10px;height:10px;background:transparent;box-sizing:border-box;border:1.2px solid #444"></div><div class="t" style="left:610px;top:93.35000000000001px;font-size:10.5px;color:#222;letter-spacing:-0.15px;font-weight:normal;">No</div><div class="r" style="left:17px;top:125px;width:904px;height:1px;background:#f0f0f0;"></div><svg class="r" style="left:4px;top:110.28px" width="12" height="12" viewBox="0 0 12 12"><rect x="0.5" y="0.5" width="7.6" height="6.4" fill="#c48a0e" stroke="#6a4606" stroke-width="0.9"/><path d="M2 2.5h4M2 4.5h2" stroke="#f5c040" stroke-width="0.9"/><path d="M5 11 L5.3 8.6 Q7.8 7.2 10.4 8.6 L10.8 11z" fill="#3a3a3a"/><circle cx="7.8" cy="6" r="2.7" fill="#3a3a3a"/><circle cx="7.8" cy="6" r="1.8" fill="#f0e090"/></svg><div class="r" style="left:20.5px;top:111.88px;width:1.3px;height:9.2px;background:#777;"></div><div class="t" style="left:23px;top:114.28px;font-size:8px;color:#999;letter-spacing:0px;font-weight:normal;">..</div><div class="t" style="left:49px;top:111.28px;font-size:10.5px;color:#222;letter-spacing:0px;font-weight:normal;">1</div><div class="t" style="left:76px;top:111.28px;font-size:10.5px;color:#222;letter-spacing:0px;font-weight:normal;">Deck</div><div class="t" style="left:196px;top:111.28px;font-size:10.5px;color:#222;letter-spacing:0px;font-weight:normal;">23</div><div class="t" style="left:243px;top:111.28px;font-size:10.5px;color:#222;letter-spacing:0px;font-weight:normal;">27 1/2</div><div class="t" style="left:290px;top:111.28px;font-size:10.5px;color:#222;letter-spacing:0px;font-weight:normal;">0</div><div class="t" style="left:322px;top:111.28px;font-size:10.5px;color:#222;letter-spacing:0px;font-weight:normal;">3</div><div class="t" style="left:369px;top:111.28px;font-size:10.5px;color:#222;letter-spacing:0px;font-weight:normal;">3/4 2s Birch Ply</div><div class="t" style="left:466px;top:111.28px;font-size:10.5px;color:#777;letter-spacing:0.25px;font-weight:normal;width:65.5px;overflow:hidden">Job #1 - Default</div><div class="t" style="left:536px;top:111.28px;font-size:10.5px;color:#222;letter-spacing:-0.15px;font-weight:normal;">4NNNN</div><div class="r" style="left:600px;top:112.78px;width:10px;height:10px;background:transparent;box-sizing:border-box;border:1.2px solid #444"></div><div class="t" style="left:610px;top:111.28px;font-size:10.5px;color:#222;letter-spacing:-0.15px;font-weight:normal;">No</div><div class="r" style="left:17px;top:143px;width:904px;height:1px;background:#f0f0f0;"></div><svg class="r" style="left:4px;top:128.21px" width="12" height="12" viewBox="0 0 12 12"><rect x="0.5" y="0.5" width="7.6" height="6.4" fill="#c48a0e" stroke="#6a4606" stroke-width="0.9"/><path d="M2 2.5h4M2 4.5h2" stroke="#f5c040" stroke-width="0.9"/><path d="M5 11 L5.3 8.6 Q7.8 7.2 10.4 8.6 L10.8 11z" fill="#3a3a3a"/><circle cx="7.8" cy="6" r="2.7" fill="#3a3a3a"/><circle cx="7.8" cy="6" r="1.8" fill="#f0e090"/></svg><div class="r" style="left:20.5px;top:129.81px;width:1.3px;height:9.2px;background:#777;"></div><div class="t" style="left:23px;top:132.21px;font-size:8px;color:#999;letter-spacing:0px;font-weight:normal;">..</div><div class="t" style="left:49px;top:129.21px;font-size:10.5px;color:#222;letter-spacing:0px;font-weight:normal;">1</div><div class="t" style="left:76px;top:129.21px;font-size:10.5px;color:#222;letter-spacing:0px;font-weight:normal;">Front Toe</div><div class="t" style="left:196px;top:129.21px;font-size:10.5px;color:#222;letter-spacing:0px;font-weight:normal;">4 3/4</div><div class="t" style="left:243px;top:129.21px;font-size:10.5px;color:#222;letter-spacing:0px;font-weight:normal;">30</div><div class="t" style="left:290px;top:129.21px;font-size:10.5px;color:#222;letter-spacing:0px;font-weight:normal;">0</div><div class="t" style="left:322px;top:129.21px;font-size:10.5px;color:#222;letter-spacing:0px;font-weight:normal;">3</div><div class="t" style="left:369px;top:129.21px;font-size:10.5px;color:#222;letter-spacing:0px;font-weight:normal;">3/4 2s Oak Ply</div><div class="t" style="left:466px;top:129.21px;font-size:10.5px;color:#777;letter-spacing:0.25px;font-weight:normal;width:65.5px;overflow:hidden">Job #1 - Default</div><div class="t" style="left:536px;top:129.21px;font-size:10.5px;color:#222;letter-spacing:-0.15px;font-weight:normal;">4NNNN</div><div class="r" style="left:600px;top:130.71px;width:10px;height:10px;background:transparent;box-sizing:border-box;border:1.2px solid #444"></div><div class="t" style="left:610px;top:129.21px;font-size:10.5px;color:#222;letter-spacing:-0.15px;font-weight:normal;">No</div><div class="r" style="left:17px;top:161px;width:904px;height:1px;background:#f0f0f0;"></div><svg class="r" style="left:4px;top:146.14px" width="12" height="12" viewBox="0 0 12 12"><rect x="0.5" y="0.5" width="7.6" height="6.4" fill="#c48a0e" stroke="#6a4606" stroke-width="0.9"/><path d="M2 2.5h4M2 4.5h2" stroke="#f5c040" stroke-width="0.9"/><path d="M5 11 L5.3 8.6 Q7.8 7.2 10.4 8.6 L10.8 11z" fill="#3a3a3a"/><circle cx="7.8" cy="6" r="2.7" fill="#3a3a3a"/><circle cx="7.8" cy="6" r="1.8" fill="#f0e090"/></svg><div class="r" style="left:20.5px;top:147.73999999999998px;width:1.3px;height:9.2px;background:#777;"></div><div class="t" style="left:23px;top:150.14px;font-size:8px;color:#999;letter-spacing:0px;font-weight:normal;">..</div><div class="t" style="left:49px;top:147.14px;font-size:10.5px;color:#222;letter-spacing:0px;font-weight:normal;">1</div><div class="t" style="left:76px;top:147.14px;font-size:10.5px;color:#222;letter-spacing:0px;font-weight:normal;">Drawer Stretcher</div><div class="t" style="left:196px;top:147.14px;font-size:10.5px;color:#222;letter-spacing:0px;font-weight:normal;">4</div><div class="t" style="left:243px;top:147.14px;font-size:10.5px;color:#222;letter-spacing:0px;font-weight:normal;">27 1/2</div><div class="t" style="left:290px;top:147.14px;font-size:10.5px;color:#222;letter-spacing:0px;font-weight:normal;">0</div><div class="t" style="left:322px;top:147.14px;font-size:10.5px;color:#222;letter-spacing:0px;font-weight:normal;">3</div><div class="t" style="left:369px;top:147.14px;font-size:10.5px;color:#222;letter-spacing:0px;font-weight:normal;">3/4 2s Birch Ply</div><div class="t" style="left:466px;top:147.14px;font-size:10.5px;color:#777;letter-spacing:0.25px;font-weight:normal;width:65.5px;overflow:hidden">Job #1 - Default</div><div class="t" style="left:536px;top:147.14px;font-size:10.5px;color:#222;letter-spacing:-0.15px;font-weight:normal;">4NNNN</div><div class="r" style="left:600px;top:148.64px;width:10px;height:10px;background:transparent;box-sizing:border-box;border:1.2px solid #444"></div><div class="t" style="left:610px;top:147.14px;font-size:10.5px;color:#222;letter-spacing:-0.15px;font-weight:normal;">No</div><div class="r" style="left:17px;top:179px;width:904px;height:1px;background:#f0f0f0;"></div><svg class="r" style="left:4px;top:164.07px" width="12" height="12" viewBox="0 0 12 12"><circle cx="6" cy="5" r="4.4" fill="none" stroke="#7a7a8a" stroke-width="1.1"/><rect x="3.5" y="0.8" width="5" height="7.2" rx="1" fill="#e8d020" stroke="#8a7a10" stroke-width="0.6"/><path d="M3 11 L4 8.8 H8 L9 11z" fill="#3a3a55"/></svg><div class="r" style="left:20.5px;top:165.67px;width:1.3px;height:9.2px;background:#777;"></div><div class="t" style="left:23px;top:168.07px;font-size:8px;color:#999;letter-spacing:0px;font-weight:normal;">..</div><div class="t" style="left:49px;top:165.07px;font-size:10.5px;color:#222;letter-spacing:0px;font-weight:normal;">1</div><div class="t" style="left:76px;top:165.07px;font-size:10.5px;color:#222;letter-spacing:0px;font-weight:normal;">Bottom Rail</div><div class="t" style="left:196px;top:165.07px;font-size:10.5px;color:#222;letter-spacing:0px;font-weight:normal;">1 1/2</div><div class="t" style="left:243px;top:165.07px;font-size:10.5px;color:#222;letter-spacing:0px;font-weight:normal;">27</div><div class="t" style="left:290px;top:165.07px;font-size:10.5px;color:#222;letter-spacing:0px;font-weight:normal;">0</div><div class="t" style="left:322px;top:165.07px;font-size:10.5px;color:#222;letter-spacing:0px;font-weight:normal;">3</div><div class="t" style="left:369px;top:165.07px;font-size:10.5px;color:#222;letter-spacing:0px;font-weight:normal;">3/4 Solid Oak</div><div class="t" style="left:466px;top:165.07px;font-size:10.5px;color:#777;letter-spacing:0.25px;font-weight:normal;width:65.5px;overflow:hidden">Job #1 - Default</div><div class="t" style="left:536px;top:165.07px;font-size:10.5px;color:#222;letter-spacing:-0.15px;font-weight:normal;">4NNNN</div><div class="r" style="left:600px;top:166.57px;width:10px;height:10px;background:transparent;box-sizing:border-box;border:1.2px solid #444"></div><div class="t" style="left:610px;top:165.07px;font-size:10.5px;color:#222;letter-spacing:-0.15px;font-weight:normal;">No</div><div class="r" style="left:17px;top:197px;width:904px;height:1px;background:#f0f0f0;"></div><svg class="r" style="left:4px;top:182.0px" width="12" height="12" viewBox="0 0 12 12"><circle cx="6" cy="5" r="4.4" fill="none" stroke="#7a7a8a" stroke-width="1.1"/><rect x="3.5" y="0.8" width="5" height="7.2" rx="1" fill="#e8d020" stroke="#8a7a10" stroke-width="0.6"/><path d="M3 11 L4 8.8 H8 L9 11z" fill="#3a3a55"/></svg><div class="r" style="left:20.5px;top:183.6px;width:1.3px;height:9.2px;background:#777;"></div><div class="t" style="left:23px;top:186.0px;font-size:8px;color:#999;letter-spacing:0px;font-weight:normal;">..</div><div class="t" style="left:49px;top:183.0px;font-size:10.5px;color:#222;letter-spacing:0px;font-weight:normal;">1</div><div class="t" style="left:76px;top:183.0px;font-size:10.5px;color:#222;letter-spacing:0px;font-weight:normal;">Right Stile</div><div class="t" style="left:196px;top:183.0px;font-size:10.5px;color:#222;letter-spacing:0px;font-weight:normal;">1 1/2</div><div class="t" style="left:243px;top:183.0px;font-size:10.5px;color:#222;letter-spacing:0px;font-weight:normal;">30 1/2</div><div class="t" style="left:290px;top:183.0px;font-size:10.5px;color:#222;letter-spacing:0px;font-weight:normal;">0</div><div class="t" style="left:322px;top:183.0px;font-size:10.5px;color:#222;letter-spacing:0px;font-weight:normal;">3</div><div class="t" style="left:369px;top:183.0px;font-size:10.5px;color:#222;letter-spacing:0px;font-weight:normal;">3/4 Solid Oak</div><div class="t" style="left:466px;top:183.0px;font-size:10.5px;color:#777;letter-spacing:0.25px;font-weight:normal;width:65.5px;overflow:hidden">Job #1 - Default</div><div class="t" style="left:536px;top:183.0px;font-size:10.5px;color:#222;letter-spacing:-0.15px;font-weight:normal;">4NNNN</div><div class="r" style="left:600px;top:184.5px;width:10px;height:10px;background:transparent;box-sizing:border-box;border:1.2px solid #444"></div><div class="t" style="left:610px;top:183.0px;font-size:10.5px;color:#222;letter-spacing:-0.15px;font-weight:normal;">No</div><div class="r" style="left:17px;top:215px;width:904px;height:1px;background:#f0f0f0;"></div><svg class="r" style="left:4px;top:199.92999999999998px" width="12" height="12" viewBox="0 0 12 12"><circle cx="6" cy="5" r="4.4" fill="none" stroke="#7a7a8a" stroke-width="1.1"/><rect x="3.5" y="0.8" width="5" height="7.2" rx="1" fill="#e8d020" stroke="#8a7a10" stroke-width="0.6"/><path d="M3 11 L4 8.8 H8 L9 11z" fill="#3a3a55"/></svg><div class="r" style="left:20.5px;top:201.52999999999997px;width:1.3px;height:9.2px;background:#777;"></div><div class="t" style="left:23px;top:203.92999999999998px;font-size:8px;color:#999;letter-spacing:0px;font-weight:normal;">..</div><div class="t" style="left:49px;top:200.92999999999998px;font-size:10.5px;color:#222;letter-spacing:0px;font-weight:normal;">1</div><div class="t" style="left:76px;top:200.92999999999998px;font-size:10.5px;color:#222;letter-spacing:0px;font-weight:normal;">Top Rail</div><div class="t" style="left:196px;top:200.92999999999998px;font-size:10.5px;color:#222;letter-spacing:0px;font-weight:normal;">1 1/2</div><div class="t" style="left:243px;top:200.92999999999998px;font-size:10.5px;color:#222;letter-spacing:0px;font-weight:normal;">27</div><div class="t" style="left:290px;top:200.92999999999998px;font-size:10.5px;color:#222;letter-spacing:0px;font-weight:normal;">0</div><div class="t" style="left:322px;top:200.92999999999998px;font-size:10.5px;color:#222;letter-spacing:0px;font-weight:normal;">3</div><div class="t" style="left:369px;top:200.92999999999998px;font-size:10.5px;color:#222;letter-spacing:0px;font-weight:normal;">3/4 Solid Oak</div><div class="t" style="left:466px;top:200.92999999999998px;font-size:10.5px;color:#777;letter-spacing:0.25px;font-weight:normal;width:65.5px;overflow:hidden">Job #1 - Default</div><div class="t" style="left:536px;top:200.92999999999998px;font-size:10.5px;color:#222;letter-spacing:-0.15px;font-weight:normal;">4NNNN</div><div class="r" style="left:600px;top:202.42999999999998px;width:10px;height:10px;background:transparent;box-sizing:border-box;border:1.2px solid #444"></div><div class="t" style="left:610px;top:200.92999999999998px;font-size:10.5px;color:#222;letter-spacing:-0.15px;font-weight:normal;">No</div><div class="r" style="left:17px;top:233px;width:904px;height:1px;background:#f0f0f0;"></div><svg class="r" style="left:4px;top:217.85999999999999px" width="12" height="12" viewBox="0 0 12 12"><circle cx="6" cy="5" r="4.4" fill="none" stroke="#7a7a8a" stroke-width="1.1"/><rect x="3.5" y="0.8" width="5" height="7.2" rx="1" fill="#e8d020" stroke="#8a7a10" stroke-width="0.6"/><path d="M3 11 L4 8.8 H8 L9 11z" fill="#3a3a55"/></svg><div class="r" style="left:20.5px;top:219.45999999999998px;width:1.3px;height:9.2px;background:#777;"></div><div class="t" style="left:23px;top:221.85999999999999px;font-size:8px;color:#999;letter-spacing:0px;font-weight:normal;">..</div><div class="t" style="left:49px;top:218.85999999999999px;font-size:10.5px;color:#222;letter-spacing:0px;font-weight:normal;">1</div><div class="t" style="left:76px;top:218.85999999999999px;font-size:10.5px;color:#222;letter-spacing:0px;font-weight:normal;">Left Stile</div><div class="t" style="left:196px;top:218.85999999999999px;font-size:10.5px;color:#222;letter-spacing:0px;font-weight:normal;">1 1/2</div><div class="t" style="left:243px;top:218.85999999999999px;font-size:10.5px;color:#222;letter-spacing:0px;font-weight:normal;">30 1/2</div><div class="t" style="left:290px;top:218.85999999999999px;font-size:10.5px;color:#222;letter-spacing:0px;font-weight:normal;">0</div><div class="t" style="left:322px;top:218.85999999999999px;font-size:10.5px;color:#222;letter-spacing:0px;font-weight:normal;">3</div><div class="t" style="left:369px;top:218.85999999999999px;font-size:10.5px;color:#222;letter-spacing:0px;font-weight:normal;">3/4 Solid Oak</div><div class="t" style="left:466px;top:218.85999999999999px;font-size:10.5px;color:#777;letter-spacing:0.25px;font-weight:normal;width:65.5px;overflow:hidden">Job #1 - Default</div><div class="t" style="left:536px;top:218.85999999999999px;font-size:10.5px;color:#222;letter-spacing:-0.15px;font-weight:normal;">4NNNN</div><div class="r" style="left:600px;top:220.35999999999999px;width:10px;height:10px;background:transparent;box-sizing:border-box;border:1.2px solid #444"></div><div class="t" style="left:610px;top:218.85999999999999px;font-size:10.5px;color:#222;letter-spacing:-0.15px;font-weight:normal;">No</div><div class="r" style="left:17px;top:251px;width:904px;height:1px;background:#f0f0f0;"></div><svg class="r" style="left:4px;top:235.79px" width="12" height="12" viewBox="0 0 12 12"><rect x="0.5" y="0.5" width="7.6" height="6.4" fill="#c48a0e" stroke="#6a4606" stroke-width="0.9"/><path d="M2 2.5h4M2 4.5h2" stroke="#f5c040" stroke-width="0.9"/><path d="M5 11 L5.3 8.6 Q7.8 7.2 10.4 8.6 L10.8 11z" fill="#3a3a3a"/><circle cx="7.8" cy="6" r="2.7" fill="#3a3a3a"/><circle cx="7.8" cy="6" r="1.8" fill="#f0e090"/></svg><div class="r" style="left:20.5px;top:237.39px;width:1.3px;height:9.2px;background:#777;"></div><div class="t" style="left:23px;top:239.79px;font-size:8px;color:#999;letter-spacing:0px;font-weight:normal;">..</div><div class="t" style="left:49px;top:236.79px;font-size:10.5px;color:#222;letter-spacing:0px;font-weight:normal;">1</div><div class="t" style="left:76px;top:236.79px;font-size:10.5px;color:#222;letter-spacing:0px;font-weight:normal;">Door Slab</div><div class="t" style="left:196px;top:236.79px;font-size:10.5px;color:#222;letter-spacing:0px;font-weight:normal;">28</div><div class="t" style="left:243px;top:236.79px;font-size:10.5px;color:#222;letter-spacing:0px;font-weight:normal;">5 1/2</div><div class="t" style="left:290px;top:236.79px;font-size:10.5px;color:#222;letter-spacing:0px;font-weight:normal;">0</div><div class="t" style="left:322px;top:236.79px;font-size:10.5px;color:#222;letter-spacing:0px;font-weight:normal;">3</div><div class="t" style="left:369px;top:236.79px;font-size:10.5px;color:#222;letter-spacing:0px;font-weight:normal;">3/4 2s Oak Ply</div><div class="t" style="left:466px;top:236.79px;font-size:10.5px;color:#777;letter-spacing:0.25px;font-weight:normal;width:65.5px;overflow:hidden">Job #1 - Default</div><div class="t" style="left:536px;top:236.79px;font-size:10.5px;color:#222;letter-spacing:-0.15px;font-weight:normal;">4NNNN</div><div class="r" style="left:600px;top:238.29px;width:10px;height:10px;background:transparent;box-sizing:border-box;border:1.2px solid #444"></div><div class="t" style="left:610px;top:236.79px;font-size:10.5px;color:#222;letter-spacing:-0.15px;font-weight:normal;">No</div><div class="r" style="left:17px;top:269px;width:904px;height:1px;background:#f0f0f0;"></div><svg class="r" style="left:4px;top:253.72px" width="12" height="12" viewBox="0 0 12 12"><rect x="0.5" y="0.5" width="7.6" height="6.4" fill="#c48a0e" stroke="#6a4606" stroke-width="0.9"/><path d="M2 2.5h4M2 4.5h2" stroke="#f5c040" stroke-width="0.9"/><path d="M5 11 L5.3 8.6 Q7.8 7.2 10.4 8.6 L10.8 11z" fill="#3a3a3a"/><circle cx="7.8" cy="6" r="2.7" fill="#3a3a3a"/><circle cx="7.8" cy="6" r="1.8" fill="#f0e090"/></svg><div class="r" style="left:20.5px;top:255.32px;width:1.3px;height:9.2px;background:#777;"></div><div class="t" style="left:23px;top:257.72px;font-size:8px;color:#999;letter-spacing:0px;font-weight:normal;">..</div><div class="t" style="left:49px;top:254.72px;font-size:10.5px;color:#222;letter-spacing:0px;font-weight:normal;">1</div><div class="t" style="left:76px;top:254.72px;font-size:10.5px;color:#222;letter-spacing:0px;font-weight:normal;">Drawer Box Bottom</div><div class="t" style="left:196px;top:254.72px;font-size:10.5px;color:#222;letter-spacing:0px;font-weight:normal;">25</div><div class="t" style="left:243px;top:254.72px;font-size:10.5px;color:#222;letter-spacing:0px;font-weight:normal;">19</div><div class="t" style="left:290px;top:254.72px;font-size:10.5px;color:#222;letter-spacing:0px;font-weight:normal;">0</div><div class="t" style="left:322px;top:254.72px;font-size:10.5px;color:#222;letter-spacing:0px;font-weight:normal;">3</div><div class="t" style="left:369px;top:254.72px;font-size:10.5px;color:#222;letter-spacing:0px;font-weight:normal;">1/4 1s Melamine</div><div class="t" style="left:466px;top:254.72px;font-size:10.5px;color:#777;letter-spacing:0.25px;font-weight:normal;width:65.5px;overflow:hidden">Job #1 - Default</div><div class="t" style="left:536px;top:254.72px;font-size:10.5px;color:#222;letter-spacing:-0.15px;font-weight:normal;">4NNNN</div><div class="r" style="left:600px;top:256.22px;width:10px;height:10px;background:transparent;box-sizing:border-box;border:1.2px solid #444"></div><div class="t" style="left:610px;top:254.72px;font-size:10.5px;color:#222;letter-spacing:-0.15px;font-weight:normal;">No</div><div class="r" style="left:17px;top:287px;width:904px;height:1px;background:#f0f0f0;"></div><svg class="r" style="left:4px;top:271.65px" width="12" height="12" viewBox="0 0 12 12"><rect x="0.5" y="0.5" width="7.6" height="6.4" fill="#c48a0e" stroke="#6a4606" stroke-width="0.9"/><path d="M2 2.5h4M2 4.5h2" stroke="#f5c040" stroke-width="0.9"/><path d="M5 11 L5.3 8.6 Q7.8 7.2 10.4 8.6 L10.8 11z" fill="#3a3a3a"/><circle cx="7.8" cy="6" r="2.7" fill="#3a3a3a"/><circle cx="7.8" cy="6" r="1.8" fill="#f0e090"/></svg><div class="r" style="left:20.5px;top:273.25px;width:1.3px;height:9.2px;background:#777;"></div><div class="t" style="left:23px;top:275.65px;font-size:8px;color:#999;letter-spacing:0px;font-weight:normal;">..</div><div class="t" style="left:49px;top:272.65px;font-size:10.5px;color:#222;letter-spacing:0px;font-weight:normal;">1</div><div class="t" style="left:76px;top:272.65px;font-size:10.5px;color:#222;letter-spacing:0px;font-weight:normal;">Drawer Box Side</div><div class="t" style="left:196px;top:272.65px;font-size:10.5px;color:#222;letter-spacing:0px;font-weight:normal;">3</div><div class="t" style="left:243px;top:272.65px;font-size:10.5px;color:#222;letter-spacing:0px;font-weight:normal;">20</div><div class="t" style="left:290px;top:272.65px;font-size:10.5px;color:#222;letter-spacing:0px;font-weight:normal;">0</div><div class="t" style="left:322px;top:272.65px;font-size:10.5px;color:#222;letter-spacing:0px;font-weight:normal;">3</div><div class="t" style="left:369px;top:272.65px;font-size:10.5px;color:#222;letter-spacing:0px;font-weight:normal;">1/2 2s Melamine</div><div class="t" style="left:466px;top:272.65px;font-size:10.5px;color:#777;letter-spacing:0.25px;font-weight:normal;width:65.5px;overflow:hidden">Job #1 - Default</div><div class="t" style="left:536px;top:272.65px;font-size:10.5px;color:#222;letter-spacing:-0.15px;font-weight:normal;">4NNNN</div><div class="r" style="left:600px;top:274.15px;width:10px;height:10px;background:transparent;box-sizing:border-box;border:1.2px solid #444"></div><div class="t" style="left:610px;top:272.65px;font-size:10.5px;color:#222;letter-spacing:-0.15px;font-weight:normal;">No</div><div class="r" style="left:17px;top:305px;width:904px;height:1px;background:#f0f0f0;"></div><svg class="r" style="left:4px;top:289.58px" width="12" height="12" viewBox="0 0 12 12"><rect x="0.5" y="0.5" width="7.6" height="6.4" fill="#c48a0e" stroke="#6a4606" stroke-width="0.9"/><path d="M2 2.5h4M2 4.5h2" stroke="#f5c040" stroke-width="0.9"/><path d="M5 11 L5.3 8.6 Q7.8 7.2 10.4 8.6 L10.8 11z" fill="#3a3a3a"/><circle cx="7.8" cy="6" r="2.7" fill="#3a3a3a"/><circle cx="7.8" cy="6" r="1.8" fill="#f0e090"/></svg><div class="r" style="left:20.5px;top:291.18px;width:1.3px;height:9.2px;background:#777;"></div><div class="t" style="left:23px;top:293.58px;font-size:8px;color:#999;letter-spacing:0px;font-weight:normal;">..</div><div class="t" style="left:49px;top:290.58px;font-size:10.5px;color:#222;letter-spacing:0px;font-weight:normal;">1</div><div class="t" style="left:76px;top:290.58px;font-size:10.5px;color:#222;letter-spacing:0px;font-weight:normal;">Drawer Box Side</div><div class="t" style="left:196px;top:290.58px;font-size:10.5px;color:#222;letter-spacing:0px;font-weight:normal;">3</div><div class="t" style="left:243px;top:290.58px;font-size:10.5px;color:#222;letter-spacing:0px;font-weight:normal;">20</div><div class="t" style="left:290px;top:290.58px;font-size:10.5px;color:#222;letter-spacing:0px;font-weight:normal;">0</div><div class="t" style="left:322px;top:290.58px;font-size:10.5px;color:#222;letter-spacing:0px;font-weight:normal;">3</div><div class="t" style="left:369px;top:290.58px;font-size:10.5px;color:#222;letter-spacing:0px;font-weight:normal;">1/2 2s Melamine</div><div class="t" style="left:466px;top:290.58px;font-size:10.5px;color:#777;letter-spacing:0.25px;font-weight:normal;width:65.5px;overflow:hidden">Job #1 - Default</div><div class="t" style="left:536px;top:290.58px;font-size:10.5px;color:#222;letter-spacing:-0.15px;font-weight:normal;">4NNNN</div><div class="r" style="left:600px;top:292.08px;width:10px;height:10px;background:transparent;box-sizing:border-box;border:1.2px solid #444"></div><div class="t" style="left:610px;top:290.58px;font-size:10.5px;color:#222;letter-spacing:-0.15px;font-weight:normal;">No</div><div class="r" style="left:17px;top:322px;width:904px;height:1px;background:#f0f0f0;"></div><svg class="r" style="left:4px;top:307.51px" width="12" height="12" viewBox="0 0 12 12"><rect x="0.5" y="0.5" width="7.6" height="6.4" fill="#c48a0e" stroke="#6a4606" stroke-width="0.9"/><path d="M2 2.5h4M2 4.5h2" stroke="#f5c040" stroke-width="0.9"/><path d="M5 11 L5.3 8.6 Q7.8 7.2 10.4 8.6 L10.8 11z" fill="#3a3a3a"/><circle cx="7.8" cy="6" r="2.7" fill="#3a3a3a"/><circle cx="7.8" cy="6" r="1.8" fill="#f0e090"/></svg><div class="r" style="left:20.5px;top:309.11px;width:1.3px;height:9.2px;background:#777;"></div><div class="t" style="left:23px;top:311.51px;font-size:8px;color:#999;letter-spacing:0px;font-weight:normal;">..</div><div class="t" style="left:49px;top:308.51px;font-size:10.5px;color:#222;letter-spacing:0px;font-weight:normal;">1</div><div class="t" style="left:76px;top:308.51px;font-size:10.5px;color:#222;letter-spacing:0px;font-weight:normal;">Drawer Box Back</div><div class="t" style="left:196px;top:308.51px;font-size:10.5px;color:#222;letter-spacing:0px;font-weight:normal;">3</div><div class="t" style="left:243px;top:308.51px;font-size:10.5px;color:#222;letter-spacing:0px;font-weight:normal;">25</div><div class="t" style="left:290px;top:308.51px;font-size:10.5px;color:#222;letter-spacing:0px;font-weight:normal;">0</div><div class="t" style="left:322px;top:308.51px;font-size:10.5px;color:#222;letter-spacing:0px;font-weight:normal;">3</div><div class="t" style="left:369px;top:308.51px;font-size:10.5px;color:#222;letter-spacing:0px;font-weight:normal;">1/2 2s Melamine</div><div class="t" style="left:466px;top:308.51px;font-size:10.5px;color:#777;letter-spacing:0.25px;font-weight:normal;width:65.5px;overflow:hidden">Job #1 - Default</div><div class="t" style="left:536px;top:308.51px;font-size:10.5px;color:#222;letter-spacing:-0.15px;font-weight:normal;">4NNNN</div><div class="r" style="left:600px;top:310.01px;width:10px;height:10px;background:transparent;box-sizing:border-box;border:1.2px solid #444"></div><div class="t" style="left:610px;top:308.51px;font-size:10.5px;color:#222;letter-spacing:-0.15px;font-weight:normal;">No</div><div class="r" style="left:17px;top:340px;width:904px;height:1px;background:#f0f0f0;"></div><svg class="r" style="left:4px;top:325.44px" width="12" height="12" viewBox="0 0 12 12"><rect x="0.5" y="0.5" width="7.6" height="6.4" fill="#c48a0e" stroke="#6a4606" stroke-width="0.9"/><path d="M2 2.5h4M2 4.5h2" stroke="#f5c040" stroke-width="0.9"/><path d="M5 11 L5.3 8.6 Q7.8 7.2 10.4 8.6 L10.8 11z" fill="#3a3a3a"/><circle cx="7.8" cy="6" r="2.7" fill="#3a3a3a"/><circle cx="7.8" cy="6" r="1.8" fill="#f0e090"/></svg><div class="r" style="left:20.5px;top:327.04px;width:1.3px;height:9.2px;background:#777;"></div><div class="t" style="left:23px;top:329.44px;font-size:8px;color:#999;letter-spacing:0px;font-weight:normal;">..</div><div class="t" style="left:49px;top:326.44px;font-size:10.5px;color:#222;letter-spacing:0px;font-weight:normal;">1</div><div class="t" style="left:76px;top:326.44px;font-size:10.5px;color:#222;letter-spacing:0px;font-weight:normal;">Drawer Box Sub Front</div><div class="t" style="left:196px;top:326.44px;font-size:10.5px;color:#222;letter-spacing:0px;font-weight:normal;">3</div><div class="t" style="left:243px;top:326.44px;font-size:10.5px;color:#222;letter-spacing:0px;font-weight:normal;">25</div><div class="t" style="left:290px;top:326.44px;font-size:10.5px;color:#222;letter-spacing:0px;font-weight:normal;">0</div><div class="t" style="left:322px;top:326.44px;font-size:10.5px;color:#222;letter-spacing:0px;font-weight:normal;">3</div><div class="t" style="left:369px;top:326.44px;font-size:10.5px;color:#222;letter-spacing:0px;font-weight:normal;">1/2 2s Melamine</div><div class="t" style="left:466px;top:326.44px;font-size:10.5px;color:#777;letter-spacing:0.25px;font-weight:normal;width:65.5px;overflow:hidden">Job #1 - Default</div><div class="t" style="left:536px;top:326.44px;font-size:10.5px;color:#222;letter-spacing:-0.15px;font-weight:normal;">4NNNN</div><div class="r" style="left:600px;top:327.94px;width:10px;height:10px;background:transparent;box-sizing:border-box;border:1.2px solid #444"></div><div class="t" style="left:610px;top:326.44px;font-size:10.5px;color:#222;letter-spacing:-0.15px;font-weight:normal;">No</div><div class="r" style="left:17px;top:358px;width:904px;height:1px;background:#f0f0f0;"></div><svg class="r" style="left:4px;top:343.37px" width="12" height="12" viewBox="0 0 12 12"><circle cx="6" cy="5" r="4.4" fill="none" stroke="#7a7a8a" stroke-width="1.1"/><rect x="3.5" y="0.8" width="5" height="7.2" rx="1" fill="#e8d020" stroke="#8a7a10" stroke-width="0.6"/><path d="M3 11 L4 8.8 H8 L9 11z" fill="#3a3a55"/></svg><div class="r" style="left:20.5px;top:344.97px;width:1.3px;height:9.2px;background:#777;"></div><div class="t" style="left:23px;top:347.37px;font-size:8px;color:#999;letter-spacing:0px;font-weight:normal;">..</div><div class="t" style="left:49px;top:344.37px;font-size:10.5px;color:#222;letter-spacing:0px;font-weight:normal;">1</div><div class="t" style="left:76px;top:344.37px;font-size:10.5px;color:#222;letter-spacing:0px;font-weight:normal;">Mid Rail</div><div class="t" style="left:196px;top:344.37px;font-size:10.5px;color:#222;letter-spacing:0px;font-weight:normal;">1 1/2</div><div class="t" style="left:243px;top:344.37px;font-size:10.5px;color:#222;letter-spacing:0px;font-weight:normal;">27</div><div class="t" style="left:290px;top:344.37px;font-size:10.5px;color:#222;letter-spacing:0px;font-weight:normal;">0</div><div class="t" style="left:322px;top:344.37px;font-size:10.5px;color:#222;letter-spacing:0px;font-weight:normal;">3</div><div class="t" style="left:369px;top:344.37px;font-size:10.5px;color:#222;letter-spacing:0px;font-weight:normal;">3/4 Solid Oak</div><div class="t" style="left:466px;top:344.37px;font-size:10.5px;color:#777;letter-spacing:0.25px;font-weight:normal;width:65.5px;overflow:hidden">Job #1 - Default</div><div class="t" style="left:536px;top:344.37px;font-size:10.5px;color:#222;letter-spacing:-0.15px;font-weight:normal;">4NNNN</div><div class="r" style="left:600px;top:345.87px;width:10px;height:10px;background:transparent;box-sizing:border-box;border:1.2px solid #444"></div><div class="t" style="left:610px;top:344.37px;font-size:10.5px;color:#222;letter-spacing:-0.15px;font-weight:normal;">No</div><div class="r" style="left:17px;top:376px;width:904px;height:1px;background:#f0f0f0;"></div><svg class="r" style="left:4px;top:361.3px" width="12" height="12" viewBox="0 0 12 12"><rect x="0.5" y="0.5" width="7.6" height="6.4" fill="#c48a0e" stroke="#6a4606" stroke-width="0.9"/><path d="M2 2.5h4M2 4.5h2" stroke="#f5c040" stroke-width="0.9"/><path d="M5 11 L5.3 8.6 Q7.8 7.2 10.4 8.6 L10.8 11z" fill="#3a3a3a"/><circle cx="7.8" cy="6" r="2.7" fill="#3a3a3a"/><circle cx="7.8" cy="6" r="1.8" fill="#f0e090"/></svg><div class="r" style="left:20.5px;top:362.90000000000003px;width:1.3px;height:9.2px;background:#777;"></div><div class="t" style="left:23px;top:365.3px;font-size:8px;color:#999;letter-spacing:0px;font-weight:normal;">..</div><div class="t" style="left:49px;top:362.3px;font-size:10.5px;color:#222;letter-spacing:0px;font-weight:normal;">1</div><div class="t" style="left:76px;top:362.3px;font-size:10.5px;color:#222;letter-spacing:0px;font-weight:normal;">Door Slab</div><div class="t" style="left:196px;top:362.3px;font-size:10.5px;color:#222;letter-spacing:0px;font-weight:normal;">13 7/8</div><div class="t" style="left:243px;top:362.3px;font-size:10.5px;color:#222;letter-spacing:0px;font-weight:normal;">22 1/2</div><div class="t" style="left:290px;top:362.3px;font-size:10.5px;color:#222;letter-spacing:0px;font-weight:normal;">0</div><div class="t" style="left:322px;top:362.3px;font-size:10.5px;color:#222;letter-spacing:0px;font-weight:normal;">3</div><div class="t" style="left:369px;top:362.3px;font-size:10.5px;color:#222;letter-spacing:0px;font-weight:normal;">3/4 2s Oak Ply</div><div class="t" style="left:466px;top:362.3px;font-size:10.5px;color:#777;letter-spacing:0.25px;font-weight:normal;width:65.5px;overflow:hidden">Job #1 - Default</div><div class="t" style="left:536px;top:362.3px;font-size:10.5px;color:#222;letter-spacing:-0.15px;font-weight:normal;">4NNNN</div><div class="r" style="left:600px;top:363.8px;width:10px;height:10px;background:transparent;box-sizing:border-box;border:1.2px solid #444"></div><div class="t" style="left:610px;top:362.3px;font-size:10.5px;color:#222;letter-spacing:-0.15px;font-weight:normal;">No</div><div class="r" style="left:17px;top:394px;width:904px;height:1px;background:#f0f0f0;"></div><svg class="r" style="left:4px;top:379.22999999999996px" width="12" height="12" viewBox="0 0 12 12"><rect x="0.5" y="0.5" width="7.6" height="6.4" fill="#c48a0e" stroke="#6a4606" stroke-width="0.9"/><path d="M2 2.5h4M2 4.5h2" stroke="#f5c040" stroke-width="0.9"/><path d="M5 11 L5.3 8.6 Q7.8 7.2 10.4 8.6 L10.8 11z" fill="#3a3a3a"/><circle cx="7.8" cy="6" r="2.7" fill="#3a3a3a"/><circle cx="7.8" cy="6" r="1.8" fill="#f0e090"/></svg><div class="r" style="left:20.5px;top:380.83px;width:1.3px;height:9.2px;background:#777;"></div><div class="t" style="left:23px;top:383.22999999999996px;font-size:8px;color:#999;letter-spacing:0px;font-weight:normal;">..</div><div class="t" style="left:49px;top:380.22999999999996px;font-size:10.5px;color:#222;letter-spacing:0px;font-weight:normal;">1</div><div class="t" style="left:76px;top:380.22999999999996px;font-size:10.5px;color:#222;letter-spacing:0px;font-weight:normal;">Door Slab</div><div class="t" style="left:196px;top:380.22999999999996px;font-size:10.5px;color:#222;letter-spacing:0px;font-weight:normal;">13 7/8</div><div class="t" style="left:243px;top:380.22999999999996px;font-size:10.5px;color:#222;letter-spacing:0px;font-weight:normal;">22 1/2</div><div class="t" style="left:290px;top:380.22999999999996px;font-size:10.5px;color:#222;letter-spacing:0px;font-weight:normal;">0</div><div class="t" style="left:322px;top:380.22999999999996px;font-size:10.5px;color:#222;letter-spacing:0px;font-weight:normal;">3</div><div class="t" style="left:369px;top:380.22999999999996px;font-size:10.5px;color:#222;letter-spacing:0px;font-weight:normal;">3/4 2s Oak Ply</div><div class="t" style="left:466px;top:380.22999999999996px;font-size:10.5px;color:#777;letter-spacing:0.25px;font-weight:normal;width:65.5px;overflow:hidden">Job #1 - Default</div><div class="t" style="left:536px;top:380.22999999999996px;font-size:10.5px;color:#222;letter-spacing:-0.15px;font-weight:normal;">4NNNN</div><div class="r" style="left:600px;top:381.72999999999996px;width:10px;height:10px;background:transparent;box-sizing:border-box;border:1.2px solid #444"></div><div class="t" style="left:610px;top:380.22999999999996px;font-size:10.5px;color:#222;letter-spacing:-0.15px;font-weight:normal;">No</div><div class="r" style="left:17px;top:412px;width:904px;height:1px;background:#f0f0f0;"></div><svg class="r" style="left:4px;top:397.15999999999997px" width="12" height="12" viewBox="0 0 12 12"><rect x="0.5" y="0.5" width="7.6" height="6.4" fill="#c48a0e" stroke="#6a4606" stroke-width="0.9"/><path d="M2 2.5h4M2 4.5h2" stroke="#f5c040" stroke-width="0.9"/><path d="M5 11 L5.3 8.6 Q7.8 7.2 10.4 8.6 L10.8 11z" fill="#3a3a3a"/><circle cx="7.8" cy="6" r="2.7" fill="#3a3a3a"/><circle cx="7.8" cy="6" r="1.8" fill="#f0e090"/></svg><div class="r" style="left:20.5px;top:398.76px;width:1.3px;height:9.2px;background:#777;"></div><div class="t" style="left:23px;top:401.15999999999997px;font-size:8px;color:#999;letter-spacing:0px;font-weight:normal;">..</div><div class="t" style="left:49px;top:398.15999999999997px;font-size:10.5px;color:#222;letter-spacing:0px;font-weight:normal;">1</div><div class="t" style="left:76px;top:398.15999999999997px;font-size:10.5px;color:#222;letter-spacing:0px;font-weight:normal;">Unfinished Left End</div><div class="t" style="left:196px;top:398.15999999999997px;font-size:10.5px;color:#222;letter-spacing:0px;font-weight:normal;">23 1/4</div><div class="t" style="left:243px;top:398.15999999999997px;font-size:10.5px;color:#222;letter-spacing:0px;font-weight:normal;">34 1/2</div><div class="t" style="left:290px;top:398.15999999999997px;font-size:10.5px;color:#222;letter-spacing:0px;font-weight:normal;">0</div><div class="t" style="left:322px;top:398.15999999999997px;font-size:10.5px;color:#222;letter-spacing:0px;font-weight:normal;">2</div><div class="t" style="left:369px;top:398.15999999999997px;font-size:10.5px;color:#222;letter-spacing:0px;font-weight:normal;">3/4 2s Birch Ply</div><div class="t" style="left:466px;top:398.15999999999997px;font-size:10.5px;color:#777;letter-spacing:0.25px;font-weight:normal;width:65.5px;overflow:hidden">Job #1 - Default</div><div class="t" style="left:536px;top:398.15999999999997px;font-size:10.5px;color:#222;letter-spacing:-0.15px;font-weight:normal;">6NNNNNN</div><div class="r" style="left:600px;top:399.65999999999997px;width:10px;height:10px;background:transparent;box-sizing:border-box;border:1.2px solid #444"></div><div class="t" style="left:610px;top:398.15999999999997px;font-size:10.5px;color:#222;letter-spacing:-0.15px;font-weight:normal;">No</div><div class="r" style="left:17px;top:430px;width:904px;height:1px;background:#f0f0f0;"></div><svg class="r" style="left:4px;top:415.09px" width="12" height="12" viewBox="0 0 12 12"><rect x="0.5" y="0.5" width="7.6" height="6.4" fill="#c48a0e" stroke="#6a4606" stroke-width="0.9"/><path d="M2 2.5h4M2 4.5h2" stroke="#f5c040" stroke-width="0.9"/><path d="M5 11 L5.3 8.6 Q7.8 7.2 10.4 8.6 L10.8 11z" fill="#3a3a3a"/><circle cx="7.8" cy="6" r="2.7" fill="#3a3a3a"/><circle cx="7.8" cy="6" r="1.8" fill="#f0e090"/></svg><div class="r" style="left:20.5px;top:416.69px;width:1.3px;height:9.2px;background:#777;"></div><div class="t" style="left:23px;top:419.09px;font-size:8px;color:#999;letter-spacing:0px;font-weight:normal;">..</div><div class="t" style="left:49px;top:416.09px;font-size:10.5px;color:#222;letter-spacing:0px;font-weight:normal;">1</div><div class="t" style="left:76px;top:416.09px;font-size:10.5px;color:#222;letter-spacing:0px;font-weight:normal;">Unfinished Right End</div><div class="t" style="left:196px;top:416.09px;font-size:10.5px;color:#222;letter-spacing:0px;font-weight:normal;">23 1/4</div><div class="t" style="left:243px;top:416.09px;font-size:10.5px;color:#222;letter-spacing:0px;font-weight:normal;">34 1/2</div><div class="t" style="left:290px;top:416.09px;font-size:10.5px;color:#222;letter-spacing:0px;font-weight:normal;">0</div><div class="t" style="left:322px;top:416.09px;font-size:10.5px;color:#222;letter-spacing:0px;font-weight:normal;">2</div><div class="t" style="left:369px;top:416.09px;font-size:10.5px;color:#222;letter-spacing:0px;font-weight:normal;">3/4 2s Birch Ply</div><div class="t" style="left:466px;top:416.09px;font-size:10.5px;color:#777;letter-spacing:0.25px;font-weight:normal;width:65.5px;overflow:hidden">Job #1 - Default</div><div class="t" style="left:536px;top:416.09px;font-size:10.5px;color:#222;letter-spacing:-0.15px;font-weight:normal;">6NNNNNN</div><div class="r" style="left:600px;top:417.59px;width:10px;height:10px;background:transparent;box-sizing:border-box;border:1.2px solid #444"></div><div class="t" style="left:610px;top:416.09px;font-size:10.5px;color:#222;letter-spacing:-0.15px;font-weight:normal;">No</div><div class="r" style="left:17px;top:448px;width:904px;height:1px;background:#f0f0f0;"></div><svg class="r" style="left:4px;top:433.02px" width="12" height="12" viewBox="0 0 12 12"><rect x="0.5" y="0.5" width="7.6" height="6.4" fill="#c48a0e" stroke="#6a4606" stroke-width="0.9"/><path d="M2 2.5h4M2 4.5h2" stroke="#f5c040" stroke-width="0.9"/><path d="M5 11 L5.3 8.6 Q7.8 7.2 10.4 8.6 L10.8 11z" fill="#3a3a3a"/><circle cx="7.8" cy="6" r="2.7" fill="#3a3a3a"/><circle cx="7.8" cy="6" r="1.8" fill="#f0e090"/></svg><div class="r" style="left:20.5px;top:434.62px;width:1.3px;height:9.2px;background:#777;"></div><div class="t" style="left:23px;top:437.02px;font-size:8px;color:#999;letter-spacing:0px;font-weight:normal;">..</div><div class="t" style="left:49px;top:434.02px;font-size:10.5px;color:#222;letter-spacing:0px;font-weight:normal;">1</div><div class="t" style="left:76px;top:434.02px;font-size:10.5px;color:#222;letter-spacing:0px;font-weight:normal;">Unfinished Back</div><div class="t" style="left:196px;top:434.02px;font-size:10.5px;color:#222;letter-spacing:0px;font-weight:normal;">28 3/4</div><div class="t" style="left:243px;top:434.02px;font-size:10.5px;color:#222;letter-spacing:0px;font-weight:normal;">29 3/4</div><div class="t" style="left:290px;top:434.02px;font-size:10.5px;color:#222;letter-spacing:0px;font-weight:normal;">0</div><div class="t" style="left:322px;top:434.02px;font-size:10.5px;color:#222;letter-spacing:0px;font-weight:normal;">2</div><div class="t" style="left:369px;top:434.02px;font-size:10.5px;color:#222;letter-spacing:0px;font-weight:normal;">1/4 2s Birch Ply</div><div class="t" style="left:466px;top:434.02px;font-size:10.5px;color:#777;letter-spacing:0.25px;font-weight:normal;width:65.5px;overflow:hidden">Job #1 - Default</div><div class="t" style="left:536px;top:434.02px;font-size:10.5px;color:#222;letter-spacing:-0.15px;font-weight:normal;">4NNNN</div><div class="r" style="left:600px;top:435.52px;width:10px;height:10px;background:transparent;box-sizing:border-box;border:1.2px solid #444"></div><div class="t" style="left:610px;top:434.02px;font-size:10.5px;color:#222;letter-spacing:-0.15px;font-weight:normal;">No</div><div class="r" style="left:17px;top:466px;width:904px;height:1px;background:#f0f0f0;"></div><svg class="r" style="left:4px;top:450.95px" width="12" height="12" viewBox="0 0 12 12"><rect x="0.5" y="0.5" width="7.6" height="6.4" fill="#c48a0e" stroke="#6a4606" stroke-width="0.9"/><path d="M2 2.5h4M2 4.5h2" stroke="#f5c040" stroke-width="0.9"/><path d="M5 11 L5.3 8.6 Q7.8 7.2 10.4 8.6 L10.8 11z" fill="#3a3a3a"/><circle cx="7.8" cy="6" r="2.7" fill="#3a3a3a"/><circle cx="7.8" cy="6" r="1.8" fill="#f0e090"/></svg><div class="r" style="left:20.5px;top:452.55px;width:1.3px;height:9.2px;background:#777;"></div><div class="t" style="left:23px;top:454.95px;font-size:8px;color:#999;letter-spacing:0px;font-weight:normal;">..</div><div class="t" style="left:49px;top:451.95px;font-size:10.5px;color:#222;letter-spacing:0px;font-weight:normal;">1</div><div class="t" style="left:76px;top:451.95px;font-size:10.5px;color:#222;letter-spacing:0px;font-weight:normal;">Nailer</div><div class="t" style="left:196px;top:451.95px;font-size:10.5px;color:#222;letter-spacing:0px;font-weight:normal;">4</div><div class="t" style="left:243px;top:451.95px;font-size:10.5px;color:#222;letter-spacing:0px;font-weight:normal;">28</div><div class="t" style="left:290px;top:451.95px;font-size:10.5px;color:#222;letter-spacing:0px;font-weight:normal;">0</div><div class="t" style="left:322px;top:451.95px;font-size:10.5px;color:#222;letter-spacing:0px;font-weight:normal;">2</div><div class="t" style="left:369px;top:451.95px;font-size:10.5px;color:#222;letter-spacing:0px;font-weight:normal;">3/4 2s Birch Ply</div><div class="t" style="left:466px;top:451.95px;font-size:10.5px;color:#777;letter-spacing:0.25px;font-weight:normal;width:65.5px;overflow:hidden">Job #1 - Default</div><div class="t" style="left:536px;top:451.95px;font-size:10.5px;color:#222;letter-spacing:-0.15px;font-weight:normal;">4NNNN</div><div class="r" style="left:600px;top:453.45px;width:10px;height:10px;background:transparent;box-sizing:border-box;border:1.2px solid #444"></div><div class="t" style="left:610px;top:451.95px;font-size:10.5px;color:#222;letter-spacing:-0.15px;font-weight:normal;">No</div><div class="r" style="left:17px;top:484px;width:904px;height:1px;background:#f0f0f0;"></div><svg class="r" style="left:4px;top:468.88px" width="12" height="12" viewBox="0 0 12 12"><rect x="0.5" y="0.5" width="7.6" height="6.4" fill="#c48a0e" stroke="#6a4606" stroke-width="0.9"/><path d="M2 2.5h4M2 4.5h2" stroke="#f5c040" stroke-width="0.9"/><path d="M5 11 L5.3 8.6 Q7.8 7.2 10.4 8.6 L10.8 11z" fill="#3a3a3a"/><circle cx="7.8" cy="6" r="2.7" fill="#3a3a3a"/><circle cx="7.8" cy="6" r="1.8" fill="#f0e090"/></svg><div class="r" style="left:20.5px;top:470.48px;width:1.3px;height:9.2px;background:#777;"></div><div class="t" style="left:23px;top:472.88px;font-size:8px;color:#999;letter-spacing:0px;font-weight:normal;">..</div><div class="t" style="left:49px;top:469.88px;font-size:10.5px;color:#222;letter-spacing:0px;font-weight:normal;">1</div><div class="t" style="left:76px;top:469.88px;font-size:10.5px;color:#222;letter-spacing:0px;font-weight:normal;">Top Stretcher</div><div class="t" style="left:196px;top:469.88px;font-size:10.5px;color:#222;letter-spacing:0px;font-weight:normal;">4</div><div class="t" style="left:243px;top:469.88px;font-size:10.5px;color:#222;letter-spacing:0px;font-weight:normal;">28</div><div class="t" style="left:290px;top:469.88px;font-size:10.5px;color:#222;letter-spacing:0px;font-weight:normal;">0</div><div class="t" style="left:322px;top:469.88px;font-size:10.5px;color:#222;letter-spacing:0px;font-weight:normal;">2</div><div class="t" style="left:369px;top:469.88px;font-size:10.5px;color:#222;letter-spacing:0px;font-weight:normal;">3/4 2s Birch Ply</div><div class="t" style="left:466px;top:469.88px;font-size:10.5px;color:#777;letter-spacing:0.25px;font-weight:normal;width:65.5px;overflow:hidden">Job #1 - Default</div><div class="t" style="left:536px;top:469.88px;font-size:10.5px;color:#222;letter-spacing:-0.15px;font-weight:normal;">4NNNN</div><div class="r" style="left:600px;top:471.38px;width:10px;height:10px;background:transparent;box-sizing:border-box;border:1.2px solid #444"></div><div class="t" style="left:610px;top:469.88px;font-size:10.5px;color:#222;letter-spacing:-0.15px;font-weight:normal;">No</div><div class="r" style="left:17px;top:502px;width:904px;height:1px;background:#f0f0f0;"></div><svg class="r" style="left:4px;top:486.81px" width="12" height="12" viewBox="0 0 12 12"><rect x="0.5" y="0.5" width="7.6" height="6.4" fill="#c48a0e" stroke="#6a4606" stroke-width="0.9"/><path d="M2 2.5h4M2 4.5h2" stroke="#f5c040" stroke-width="0.9"/><path d="M5 11 L5.3 8.6 Q7.8 7.2 10.4 8.6 L10.8 11z" fill="#3a3a3a"/><circle cx="7.8" cy="6" r="2.7" fill="#3a3a3a"/><circle cx="7.8" cy="6" r="1.8" fill="#f0e090"/></svg><div class="r" style="left:20.5px;top:488.41px;width:1.3px;height:9.2px;background:#777;"></div><div class="t" style="left:23px;top:490.81px;font-size:8px;color:#999;letter-spacing:0px;font-weight:normal;">..</div><div class="t" style="left:49px;top:487.81px;font-size:10.5px;color:#222;letter-spacing:0px;font-weight:normal;">1</div><div class="t" style="left:76px;top:487.81px;font-size:10.5px;color:#222;letter-spacing:0px;font-weight:normal;">Top Stretcher</div><div class="t" style="left:196px;top:487.81px;font-size:10.5px;color:#222;letter-spacing:0px;font-weight:normal;">4</div><div class="t" style="left:243px;top:487.81px;font-size:10.5px;color:#222;letter-spacing:0px;font-weight:normal;">28</div><div class="t" style="left:290px;top:487.81px;font-size:10.5px;color:#222;letter-spacing:0px;font-weight:normal;">0</div><div class="t" style="left:322px;top:487.81px;font-size:10.5px;color:#222;letter-spacing:0px;font-weight:normal;">2</div><div class="t" style="left:369px;top:487.81px;font-size:10.5px;color:#222;letter-spacing:0px;font-weight:normal;">3/4 2s Birch Ply</div><div class="t" style="left:466px;top:487.81px;font-size:10.5px;color:#777;letter-spacing:0.25px;font-weight:normal;width:65.5px;overflow:hidden">Job #1 - Default</div><div class="t" style="left:536px;top:487.81px;font-size:10.5px;color:#222;letter-spacing:-0.15px;font-weight:normal;">4NNNN</div><div class="r" style="left:600px;top:489.31px;width:10px;height:10px;background:transparent;box-sizing:border-box;border:1.2px solid #444"></div><div class="t" style="left:610px;top:487.81px;font-size:10.5px;color:#222;letter-spacing:-0.15px;font-weight:normal;">No</div><div class="r" style="left:46px;top:0px;width:1px;height:490px;background:#f0f0f0;"></div><div class="r" style="left:73px;top:0px;width:1px;height:490px;background:#f0f0f0;"></div><div class="r" style="left:193px;top:0px;width:1px;height:490px;background:#f0f0f0;"></div><div class="r" style="left:240px;top:0px;width:1px;height:490px;background:#f0f0f0;"></div><div class="r" style="left:287px;top:0px;width:1px;height:490px;background:#f0f0f0;"></div><div class="r" style="left:319px;top:0px;width:1px;height:490px;background:#f0f0f0;"></div><div class="r" style="left:366px;top:0px;width:1px;height:490px;background:#f0f0f0;"></div><div class="r" style="left:463px;top:0px;width:1px;height:490px;background:#f0f0f0;"></div><div class="r" style="left:533px;top:0px;width:1px;height:490px;background:#f0f0f0;"></div><div class="r" style="left:596px;top:0px;width:1px;height:490px;background:#f0f0f0;"></div><div class="r" style="left:674px;top:0px;width:1px;height:490px;background:#f0f0f0;"></div><div class="r" style="left:744px;top:0px;width:1px;height:490px;background:#f0f0f0;"></div><div class="r" style="left:821px;top:0px;width:1px;height:490px;background:#f0f0f0;"></div><div class="r" style="left:893px;top:0px;width:1px;height:490px;background:#f0f0f0;"></div></div><div class="r" style="left:172px;top:657px;width:921px;height:15px;background:#fff;"></div><div class="r" style="left:172px;top:656.5px;width:921px;height:1px;background:#ccc;"></div><div class="r" style="left:186px;top:657px;width:1px;height:15px;background:#e0e0e0;"></div><svg class="r" style="left:175px;top:660px" width="8" height="9" viewBox="0 0 8 9"><path d="M6 0.5v8l-4.5-4z" fill="#606060"/></svg><div class="r" style="left:962px;top:657px;width:131px;height:14px;background:#c8c8c8;"></div><div class="r" style="left:171px;top:671px;width:922px;height:2px;background:#777;"></div><div class="r" style="left:171px;top:128px;width:1.4px;height:545px;background:#999;"></div><div class="r" style="left:0px;top:673px;width:1093px;height:23px;background:#f0f0f0;"></div><div class="r" style="left:0px;top:672px;width:171px;height:1px;background:#c4c4c4;"></div><div class="t" style="left:9.3px;top:681.6px;font-size:10px;color:#444;letter-spacing:-0.2px;font-weight:normal;-webkit-text-stroke-width:0.3px">This Product is Licensed to : CV Development Team</div><div class="t" style="left:937px;top:680px;font-size:11px;color:#222;letter-spacing:-0.5px;font-weight:normal;">Inches</div><div class="t" style="left:975px;top:680px;font-size:11px;color:#222;letter-spacing:-0.4px;font-weight:normal;">1/32</div><svg class="r" style="left:1004px;top:680px" width="15" height="10" viewBox="0 0 15 10"><path d="M1 4h13M7 6h6" stroke="#bbb" stroke-width="2"/></svg><svg class="r" style="left:1025px;top:678px" width="14" height="14" viewBox="0 0 14 14"><path d="M7 0v14M0 7h14" stroke="#555" stroke-width="1.5"/></svg><div class="r" style="left:1043px;top:677px;width:20px;height:16px;background:#d0d0d0;"></div><svg class="r" style="left:1045px;top:678px" width="16" height="14" viewBox="0 0 16 14"><path d="M1 1h14v12H1z" fill="none" stroke="#666"/><path d="M4 1v12M7 1v12M10 1v12M13 1v12M1 4h14M1 7h14M1 10h14" stroke="#777" stroke-width="0.8"/></svg><svg class="r" style="left:1066px;top:678px" width="14" height="14" viewBox="0 0 14 14"><rect x="0.5" y="0.5" width="13" height="13" fill="none" stroke="#555"/><path d="M7 0.5v13M0.5 4h13" stroke="#555"/></svg>
</body></html>
